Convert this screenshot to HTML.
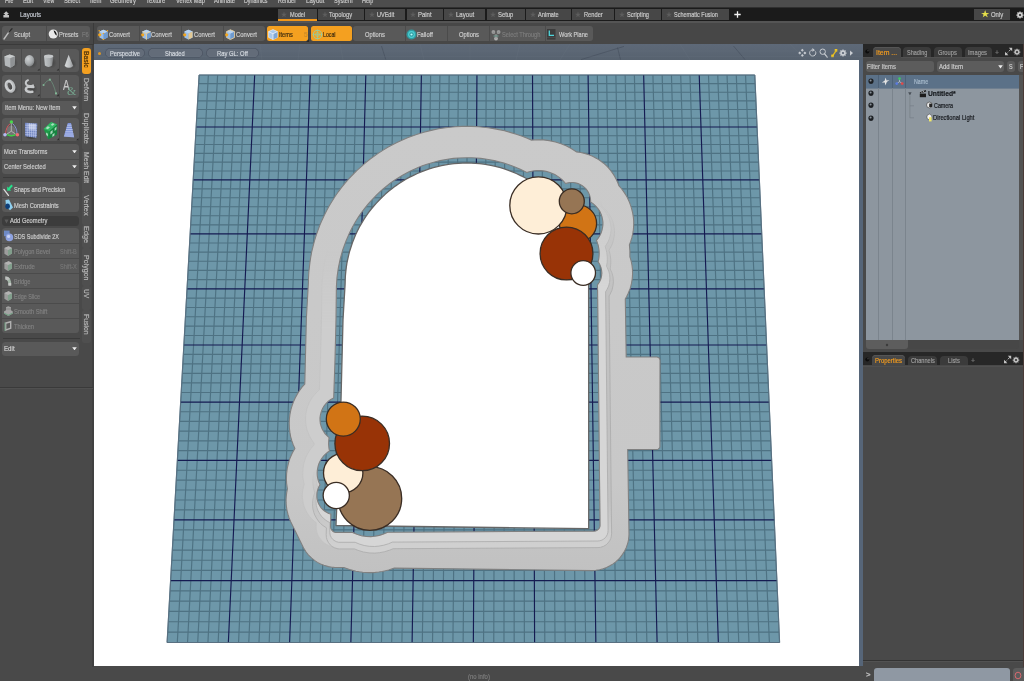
<!DOCTYPE html>
<html lang="en"><head><meta charset="utf-8"><title>Modo</title><style>
html,body{margin:0;padding:0;background:#494949;}
body{width:1024px;height:681px;overflow:hidden;position:relative;font-family:"Liberation Sans",sans-serif;}
#wrap{position:absolute;left:-20px;top:-20px;width:1064px;height:721px;background:#494949;filter:blur(0.7px);}
#app{position:absolute;left:20px;top:20px;width:1024px;height:681px;}

.b{position:absolute;display:block;}
.t{position:absolute;white-space:nowrap;transform-origin:0 50%;display:block;-webkit-text-stroke:0.2px currentColor;}
</style></head><body>
<div id="wrap"><div id="app">
<div class="b" style="left:94.00px;top:59.60px;width:764.60px;height:606.90px;background:#ffffff;"></div>
<div class="b" style="left:94.00px;top:44.00px;width:770.00px;height:15.60px;background:linear-gradient(#5e6978,#57626f);"></div>
<div class="b" style="left:858.60px;top:59.60px;width:5.40px;height:606.90px;background:#566578;"></div>
<svg class="b" style="left:0;top:0" width="1024" height="681" viewBox="0 0 1024 681"><polygon points="199.1,75.0 754.8,75.0 779.6,642.5 167.1,642.5" fill="#6d97a9"/><path d="M199.10 75.00L167.10 642.50M199.10 75.00L754.80 75.00M208.36 75.00L177.31 642.50M198.62 83.59L755.18 83.59M217.62 75.00L187.52 642.50M198.13 92.22L755.55 92.22M226.88 75.00L197.72 642.50M197.64 100.86L755.93 100.86M236.15 75.00L207.93 642.50M197.15 109.54L756.31 109.54M245.41 75.00L218.14 642.50M196.66 118.24L756.69 118.24M263.93 75.00L238.56 642.50M195.68 135.73L757.45 135.73M273.19 75.00L248.77 642.50M195.18 144.51L757.84 144.51M282.45 75.00L258.97 642.50M194.68 153.32L758.22 153.32M291.72 75.00L269.18 642.50M194.19 162.16L758.61 162.16M300.98 75.00L279.39 642.50M193.69 171.03L759.00 171.03M319.50 75.00L299.81 642.50M192.68 188.84L759.77 188.84M328.76 75.00L310.02 642.50M192.18 197.79L760.17 197.79M338.02 75.00L320.22 642.50M191.67 206.77L760.56 206.77M347.29 75.00L330.43 642.50M191.16 215.78L760.95 215.78M356.55 75.00L340.64 642.50M190.65 224.82L761.35 224.82M375.07 75.00L361.06 642.50M189.63 242.98L762.14 242.98M384.33 75.00L371.27 642.50M189.11 252.10L762.54 252.10M393.60 75.00L381.47 642.50M188.60 261.25L762.94 261.25M402.86 75.00L391.68 642.50M188.08 270.43L763.34 270.43M412.12 75.00L401.89 642.50M187.56 279.64L763.74 279.64M430.64 75.00L422.31 642.50M186.52 298.15L764.55 298.15M439.90 75.00L432.52 642.50M185.99 307.45L764.96 307.45M449.17 75.00L442.72 642.50M185.47 316.78L765.37 316.78M458.43 75.00L452.93 642.50M184.94 326.14L765.78 326.14M467.69 75.00L463.14 642.50M184.41 335.53L766.19 335.53M486.21 75.00L483.56 642.50M183.35 354.40L767.01 354.40M495.47 75.00L493.77 642.50M182.81 363.89L767.42 363.89M504.74 75.00L503.97 642.50M182.27 373.40L767.84 373.40M514.00 75.00L514.18 642.50M181.74 382.94L768.26 382.94M523.26 75.00L524.39 642.50M181.20 392.52L768.68 392.52M541.78 75.00L544.81 642.50M180.11 411.76L769.52 411.76M551.04 75.00L555.02 642.50M179.57 421.43L769.94 421.43M560.31 75.00L565.22 642.50M179.02 431.13L770.36 431.13M569.57 75.00L575.43 642.50M178.47 440.87L770.79 440.87M578.83 75.00L585.64 642.50M177.92 450.63L771.22 450.63M597.35 75.00L606.06 642.50M176.81 470.26L772.07 470.26M606.61 75.00L616.27 642.50M176.26 480.12L772.50 480.12M615.88 75.00L626.47 642.50M175.70 490.02L772.94 490.02M625.14 75.00L636.68 642.50M175.14 499.95L773.37 499.95M634.40 75.00L646.89 642.50M174.58 509.91L773.81 509.91M652.92 75.00L667.31 642.50M173.45 529.93L774.68 529.93M662.18 75.00L677.52 642.50M172.88 540.00L775.12 540.00M671.45 75.00L687.72 642.50M172.31 550.09L775.56 550.09M680.71 75.00L697.93 642.50M171.74 560.22L776.00 560.22M689.97 75.00L708.14 642.50M171.17 570.38L776.45 570.38M708.49 75.00L728.56 642.50M170.01 590.81L777.34 590.81M717.75 75.00L738.77 642.50M169.44 601.08L777.79 601.08M727.02 75.00L748.97 642.50M168.85 611.38L778.24 611.38M736.28 75.00L759.18 642.50M168.27 621.72L778.69 621.72M745.54 75.00L769.39 642.50M167.69 632.09L779.15 632.09M754.80 75.00L779.60 642.50M167.10 642.50L779.60 642.50" stroke="#4a6e7e" stroke-width="1.15" fill="none" opacity="0.9"/><path d="M254.67 75.00L228.35 642.50M196.17 126.97L757.07 126.97M310.24 75.00L289.60 642.50M193.18 179.92L759.39 179.92M365.81 75.00L350.85 642.50M190.14 233.88L761.74 233.88M421.38 75.00L412.10 642.50M187.04 288.88L764.15 288.88M476.95 75.00L473.35 642.50M183.88 344.95L766.60 344.95M532.52 75.00L534.60 642.50M180.65 402.13L769.10 402.13M588.09 75.00L595.85 642.50M177.37 460.43L771.64 460.43M643.66 75.00L657.10 642.50M174.01 519.90L774.24 519.90M699.23 75.00L718.35 642.50M170.59 580.58L776.89 580.58" stroke="#151b52" stroke-width="1.15" fill="none"/><polygon points="199.1,75.0 754.8,75.0 779.6,642.5 167.1,642.5" fill="none" stroke="#5a6f80" stroke-width="0.8"/><defs><linearGradient id="gs" x1="0" y1="0" x2="0" y2="1"><stop offset="0" stop-color="#cacaca"/><stop offset="0.8" stop-color="#c8c8c8"/><stop offset="1" stop-color="#c1c1c1"/></linearGradient><linearGradient id="zm" gradientUnits="userSpaceOnUse" x1="0" y1="250" x2="0" y2="330"><stop offset="0" stop-color="#fff" stop-opacity="0"/><stop offset="1" stop-color="#fff" stop-opacity="1"/></linearGradient><linearGradient id="zx" gradientUnits="userSpaceOnUse" x1="420" y1="0" x2="520" y2="0"><stop offset="0" stop-color="#fff" stop-opacity="1"/><stop offset="1" stop-color="#fff" stop-opacity="0"/></linearGradient><mask id="mk" maskUnits="userSpaceOnUse" x="0" y="0" width="1024" height="681"><rect x="0" y="0" width="1024" height="681" fill="url(#zm)"/></mask><mask id="mx" maskUnits="userSpaceOnUse" x="0" y="0" width="1024" height="681"><rect x="0" y="0" width="1024" height="681" fill="url(#zx)"/></mask><linearGradient id="gb" gradientUnits="userSpaceOnUse" x1="0" y1="500" x2="0" y2="545"><stop offset="0" stop-color="#c2c2c2"/><stop offset="1" stop-color="#d0d0d0"/></linearGradient><linearGradient id="gy" gradientUnits="userSpaceOnUse" x1="0" y1="470" x2="0" y2="515"><stop offset="0" stop-color="#fff" stop-opacity="0"/><stop offset="1" stop-color="#fff" stop-opacity="1"/></linearGradient><linearGradient id="gt" gradientUnits="userSpaceOnUse" x1="0" y1="200" x2="0" y2="290"><stop offset="0" stop-color="#fff" stop-opacity="0"/><stop offset="1" stop-color="#fff" stop-opacity="1"/></linearGradient><mask id="mb" maskUnits="userSpaceOnUse" x="0" y="0" width="1024" height="681"><rect x="0" y="0" width="470" height="681" fill="url(#gy)"/><rect x="470" y="0" width="554" height="681" fill="url(#gt)"/></mask><clipPath id="rc"><path d="M286.7 492.6L286.3 496.2L286.1 499.0L286.1 502.4L286.3 505.2L286.7 508.5L287.2 511.3L288.0 514.5L289.1 518.0L290.7 521.8L303.6 548.0L306.1 552.0L308.3 554.8L311.7 558.2L314.5 560.4L317.4 562.4L320.6 564.0L323.9 565.3L328.5 566.6L332.0 567.2L334.3 567.4L343.9 567.5L349.5 569.5L352.7 570.4L356.0 571.2L359.3 571.8L362.7 572.2L368.7 572.6L372.0 572.6L375.4 572.4L378.8 572.0L382.1 571.5L385.4 570.8L388.7 570.0L394.3 568.1L592.2 570.6L595.9 570.3L599.6 569.7L603.1 568.8L606.6 567.5L609.9 565.8L613.1 563.9L616.0 561.7L618.7 559.1L620.3 557.3L622.5 554.4L624.5 551.3L626.1 548.0L627.3 544.6L628.0 542.3L628.5 539.9L628.9 536.3L629.0 533.9L627.7 449.5L657.0 449.5L658.0 449.2L658.8 448.8L659.6 447.8L659.9 446.8L660.0 360.3L659.7 359.0L659.3 358.2L658.3 357.4L657.0 357.0L626.2 357.0L625.3 298.8L626.6 296.7L628.0 293.7L630.0 288.9L630.7 286.6L631.5 283.4L632.3 278.3L632.6 273.5L632.4 268.6L632.0 265.3L631.5 262.6L630.7 259.4L629.9 256.9L629.9 250.8L629.4 244.9L630.7 241.4L631.8 237.9L632.5 234.8L633.2 231.2L633.5 228.0L633.7 224.4L633.7 221.2L633.4 217.6L632.7 213.1L631.4 207.8L629.6 202.6L627.3 197.6L625.3 194.1L623.3 191.1L621.3 188.5L618.9 185.7L617.8 182.7L616.4 179.7L614.7 176.5L613.3 174.1L610.4 170.2L608.9 168.3L606.6 165.9L603.6 163.2L600.0 160.5L596.6 158.4L592.6 156.3L588.9 154.8L584.6 153.4L580.7 152.5L576.6 151.9L571.2 148.5L566.1 145.8L561.0 143.7L555.5 142.0L549.2 140.6L543.7 139.9L537.9 139.7L531.5 140.1L526.7 138.0L521.5 136.0L516.3 134.2L511.0 132.6L504.5 130.8L499.1 129.6L493.7 128.6L488.2 127.7L478.5 126.7L471.7 126.4L461.9 126.4L455.1 126.7L445.4 127.7L438.7 128.8L433.3 129.9L423.8 132.2L417.3 134.2L408.1 137.5L403.0 139.7L396.9 142.5L388.2 147.1L382.4 150.6L377.8 153.6L369.9 159.3L364.6 163.6L357.3 170.1L353.4 174.0L348.7 178.9L345.1 183.1L341.6 187.4L338.3 191.8L335.2 196.3L332.2 201.0L329.3 205.7L326.7 210.5L324.2 215.4L321.9 220.4L319.7 225.5L317.8 230.7L316.0 235.9L314.4 241.2L313.0 246.5L311.7 251.9L310.7 257.3L309.9 262.8L308.8 272.4L308.5 277.9L308.4 282.7L306.4 318.1L304.8 384.1L302.0 387.2L299.6 390.5L297.4 393.9L295.2 398.0L293.5 401.7L292.1 405.6L290.9 409.6L289.9 414.6L289.4 418.7L289.2 423.3L289.4 428.3L289.9 432.4L290.7 436.8L291.8 440.7L293.1 444.5L294.9 448.4L292.3 453.1L290.0 458.2L288.6 462.6L287.3 468.0L286.6 473.6L286.4 478.7L286.6 483.3L287.4 489.0ZM319.2 482.9L318.3 480.5L317.7 478.1L317.3 475.6L317.2 473.1L317.3 470.5L317.6 468.5L318.2 466.0L318.9 463.7L319.9 461.4L321.2 459.2L322.4 457.5L323.9 455.6L325.7 453.8L327.7 452.2L329.5 450.9L328.9 447.6L328.6 444.3L328.7 440.9L329.1 437.6L327.2 435.9L325.2 433.8L323.6 431.5L322.2 429.0L321.2 426.3L320.4 423.6L320.1 420.9L320.0 418.0L320.4 415.0L321.2 411.9L322.5 408.7L324.0 406.1L326.0 403.5L328.1 401.4L330.8 399.5L333.7 397.9L335.0 359.8L336.0 319.9L336.4 286.6L337.0 277.3L338.3 268.1L340.2 259.0L342.7 250.0L345.9 241.3L349.6 232.7L351.7 228.6L353.9 224.5L356.2 220.5L358.7 216.6L361.3 212.8L364.1 209.1L367.0 205.4L370.0 201.9L376.2 195.3L379.5 192.2L383.1 189.0L390.2 183.3L394.1 180.5L401.7 175.7L405.7 173.4L409.9 171.2L418.1 167.5L422.4 165.8L426.9 164.2L435.5 161.7L440.1 160.6L448.9 159.0L453.5 158.4L458.3 158.0L467.2 157.7L471.7 157.8L476.3 158.0L480.8 158.4L485.4 159.0L489.8 159.7L494.3 160.6L498.8 161.7L503.2 162.9L507.5 164.2L511.8 165.7L516.1 167.4L520.3 169.2L526.8 172.5L529.2 171.7L531.7 171.2L534.2 170.8L536.6 170.5L541.0 170.6L543.6 170.9L546.1 171.4L549.3 172.2L551.8 173.2L554.8 174.6L557.0 175.9L559.2 177.4L561.8 179.5L563.7 181.4L565.6 183.5L568.1 182.9L570.5 182.5L573.1 182.5L575.5 182.9L578.1 183.6L580.2 184.5L582.3 185.7L584.4 187.3L585.8 188.7L587.1 190.4L588.2 192.1L589.1 194.0L589.8 195.9L590.3 198.0L590.6 200.0L590.6 202.0L593.4 203.9L596.0 206.3L598.3 209.1L600.0 211.8L601.2 214.5L602.0 216.9L602.6 219.8L602.9 222.4L602.9 224.8L602.6 227.2L602.1 229.6L601.4 232.0L600.5 234.2L599.3 236.4L598.0 238.4L596.4 240.3L597.3 242.6L598.2 245.5L598.7 248.0L599.1 251.0L599.2 253.6L599.0 256.6L598.7 259.2L598.1 261.9L599.6 264.3L600.8 267.1L601.5 269.9L601.8 272.9L601.5 276.3L600.7 279.3L599.3 282.2L597.4 285.0L597.6 291.3L600.0 525.1L599.9 526.3L599.6 527.4L599.2 528.2L598.5 529.1L597.6 529.9L596.7 530.5L595.3 531.0L594.1 531.1L387.6 532.2L383.5 534.1L379.2 535.4L374.6 536.3L370.8 536.6L366.1 536.4L361.5 535.7L357.0 534.3L352.5 532.4L335.7 532.4L334.0 532.0L332.6 531.0L331.5 529.7L330.8 528.2L330.6 526.5L330.9 514.1L328.8 513.4L326.6 512.3L324.6 511.0L322.8 509.5L321.2 507.8L319.8 505.8L318.7 503.7L317.8 501.5L317.2 499.4L316.9 497.3L316.9 495.1L317.0 493.1L317.4 490.9L318.0 488.9L318.9 486.8L320.0 484.8Z" clip-rule="evenodd"/></clipPath></defs><path d="M286.7 492.6L286.3 496.2L286.1 499.0L286.1 502.4L286.3 505.2L286.7 508.5L287.2 511.3L288.0 514.5L289.1 518.0L290.7 521.8L303.6 548.0L306.1 552.0L308.3 554.8L311.7 558.2L314.5 560.4L317.4 562.4L320.6 564.0L323.9 565.3L328.5 566.6L332.0 567.2L334.3 567.4L343.9 567.5L349.5 569.5L352.7 570.4L356.0 571.2L359.3 571.8L362.7 572.2L368.7 572.6L372.0 572.6L375.4 572.4L378.8 572.0L382.1 571.5L385.4 570.8L388.7 570.0L394.3 568.1L592.2 570.6L595.9 570.3L599.6 569.7L603.1 568.8L606.6 567.5L609.9 565.8L613.1 563.9L616.0 561.7L618.7 559.1L620.3 557.3L622.5 554.4L624.5 551.3L626.1 548.0L627.3 544.6L628.0 542.3L628.5 539.9L628.9 536.3L629.0 533.9L627.7 449.5L657.0 449.5L658.0 449.2L658.8 448.8L659.6 447.8L659.9 446.8L660.0 360.3L659.7 359.0L659.3 358.2L658.3 357.4L657.0 357.0L626.2 357.0L625.3 298.8L626.6 296.7L628.0 293.7L630.0 288.9L630.7 286.6L631.5 283.4L632.3 278.3L632.6 273.5L632.4 268.6L632.0 265.3L631.5 262.6L630.7 259.4L629.9 256.9L629.9 250.8L629.4 244.9L630.7 241.4L631.8 237.9L632.5 234.8L633.2 231.2L633.5 228.0L633.7 224.4L633.7 221.2L633.4 217.6L632.7 213.1L631.4 207.8L629.6 202.6L627.3 197.6L625.3 194.1L623.3 191.1L621.3 188.5L618.9 185.7L617.8 182.7L616.4 179.7L614.7 176.5L613.3 174.1L610.4 170.2L608.9 168.3L606.6 165.9L603.6 163.2L600.0 160.5L596.6 158.4L592.6 156.3L588.9 154.8L584.6 153.4L580.7 152.5L576.6 151.9L571.2 148.5L566.1 145.8L561.0 143.7L555.5 142.0L549.2 140.6L543.7 139.9L537.9 139.7L531.5 140.1L526.7 138.0L521.5 136.0L516.3 134.2L511.0 132.6L504.5 130.8L499.1 129.6L493.7 128.6L488.2 127.7L478.5 126.7L471.7 126.4L461.9 126.4L455.1 126.7L445.4 127.7L438.7 128.8L433.3 129.9L423.8 132.2L417.3 134.2L408.1 137.5L403.0 139.7L396.9 142.5L388.2 147.1L382.4 150.6L377.8 153.6L369.9 159.3L364.6 163.6L357.3 170.1L353.4 174.0L348.7 178.9L345.1 183.1L341.6 187.4L338.3 191.8L335.2 196.3L332.2 201.0L329.3 205.7L326.7 210.5L324.2 215.4L321.9 220.4L319.7 225.5L317.8 230.7L316.0 235.9L314.4 241.2L313.0 246.5L311.7 251.9L310.7 257.3L309.9 262.8L308.8 272.4L308.5 277.9L308.4 282.7L306.4 318.1L304.8 384.1L302.0 387.2L299.6 390.5L297.4 393.9L295.2 398.0L293.5 401.7L292.1 405.6L290.9 409.6L289.9 414.6L289.4 418.7L289.2 423.3L289.4 428.3L289.9 432.4L290.7 436.8L291.8 440.7L293.1 444.5L294.9 448.4L292.3 453.1L290.0 458.2L288.6 462.6L287.3 468.0L286.6 473.6L286.4 478.7L286.6 483.3L287.4 489.0ZM319.2 482.9L318.3 480.5L317.7 478.1L317.3 475.6L317.2 473.1L317.3 470.5L317.6 468.5L318.2 466.0L318.9 463.7L319.9 461.4L321.2 459.2L322.4 457.5L323.9 455.6L325.7 453.8L327.7 452.2L329.5 450.9L328.9 447.6L328.6 444.3L328.7 440.9L329.1 437.6L327.2 435.9L325.2 433.8L323.6 431.5L322.2 429.0L321.2 426.3L320.4 423.6L320.1 420.9L320.0 418.0L320.4 415.0L321.2 411.9L322.5 408.7L324.0 406.1L326.0 403.5L328.1 401.4L330.8 399.5L333.7 397.9L335.0 359.8L336.0 319.9L336.4 286.6L337.0 277.3L338.3 268.1L340.2 259.0L342.7 250.0L345.9 241.3L349.6 232.7L351.7 228.6L353.9 224.5L356.2 220.5L358.7 216.6L361.3 212.8L364.1 209.1L367.0 205.4L370.0 201.9L376.2 195.3L379.5 192.2L383.1 189.0L390.2 183.3L394.1 180.5L401.7 175.7L405.7 173.4L409.9 171.2L418.1 167.5L422.4 165.8L426.9 164.2L435.5 161.7L440.1 160.6L448.9 159.0L453.5 158.4L458.3 158.0L467.2 157.7L471.7 157.8L476.3 158.0L480.8 158.4L485.4 159.0L489.8 159.7L494.3 160.6L498.8 161.7L503.2 162.9L507.5 164.2L511.8 165.7L516.1 167.4L520.3 169.2L526.8 172.5L529.2 171.7L531.7 171.2L534.2 170.8L536.6 170.5L541.0 170.6L543.6 170.9L546.1 171.4L549.3 172.2L551.8 173.2L554.8 174.6L557.0 175.9L559.2 177.4L561.8 179.5L563.7 181.4L565.6 183.5L568.1 182.9L570.5 182.5L573.1 182.5L575.5 182.9L578.1 183.6L580.2 184.5L582.3 185.7L584.4 187.3L585.8 188.7L587.1 190.4L588.2 192.1L589.1 194.0L589.8 195.9L590.3 198.0L590.6 200.0L590.6 202.0L593.4 203.9L596.0 206.3L598.3 209.1L600.0 211.8L601.2 214.5L602.0 216.9L602.6 219.8L602.9 222.4L602.9 224.8L602.6 227.2L602.1 229.6L601.4 232.0L600.5 234.2L599.3 236.4L598.0 238.4L596.4 240.3L597.3 242.6L598.2 245.5L598.7 248.0L599.1 251.0L599.2 253.6L599.0 256.6L598.7 259.2L598.1 261.9L599.6 264.3L600.8 267.1L601.5 269.9L601.8 272.9L601.5 276.3L600.7 279.3L599.3 282.2L597.4 285.0L597.6 291.3L600.0 525.1L599.9 526.3L599.6 527.4L599.2 528.2L598.5 529.1L597.6 529.9L596.7 530.5L595.3 531.0L594.1 531.1L387.6 532.2L383.5 534.1L379.2 535.4L374.6 536.3L370.8 536.6L366.1 536.4L361.5 535.7L357.0 534.3L352.5 532.4L335.7 532.4L334.0 532.0L332.6 531.0L331.5 529.7L330.8 528.2L330.6 526.5L330.9 514.1L328.8 513.4L326.6 512.3L324.6 511.0L322.8 509.5L321.2 507.8L319.8 505.8L318.7 503.7L317.8 501.5L317.2 499.4L316.9 497.3L316.9 495.1L317.0 493.1L317.4 490.9L318.0 488.9L318.9 486.8L320.0 484.8Z" fill="url(#gs)" fill-rule="evenodd"/><g clip-path="url(#rc)"><g mask="url(#mk)"><g mask="url(#mx)"><path d="M304.3 484.2L303.2 488.2L302.5 492.0L302.4 495.6L302.4 497.9L303.2 503.1L304.3 506.9L305.2 509.1L307.1 512.8L309.4 516.2L312.2 519.3L316.2 522.8L316.2 528.2L316.7 531.3L317.0 532.7L318.2 535.5L319.6 538.0L322.5 541.4L324.7 543.2L327.3 544.8L328.6 545.4L332.9 546.7L335.7 546.9L349.5 546.9L352.9 548.3L359.2 550.0L363.8 550.7L370.2 551.1L375.7 550.8L381.9 549.7L387.9 547.9L390.8 546.7L594.2 545.6L598.4 545.1L602.8 543.7L606.4 541.5L609.3 538.8L611.6 535.7L613.1 532.7L614.1 529.0L614.5 525.0L612.0 289.2L614.3 284.3L615.5 280.0L616.0 277.5L616.3 272.9L616.0 268.6L615.6 266.4L614.6 262.5L613.3 259.4L613.7 254.3L613.6 250.5L613.1 246.2L612.4 242.6L613.9 239.8L614.8 237.5L616.3 232.5L617.0 228.7L617.4 224.8L617.4 222.4L617.0 218.4L616.2 213.9L615.0 209.9L613.2 205.8L610.7 201.5L609.5 199.9L607.2 197.0L604.3 194.3L603.5 191.0L602.8 189.2L600.4 184.3L598.4 181.4L597.1 179.7L594.6 177.1L591.2 174.3L589.6 173.2L585.8 171.1L581.9 169.6L577.5 168.5L575.1 168.2L570.7 168.0L568.4 166.2L565.2 163.9L561.0 161.5L558.0 160.1L554.3 158.6L550.0 157.4L545.2 156.5L541.2 156.1L535.4 156.1L531.9 156.4L528.3 157.0L521.9 154.1L517.1 152.3L507.5 149.0L497.7 146.5L487.7 144.7L482.1 144.0L472.5 143.3L466.7 143.2L457.0 143.6L451.7 144.1L446.4 144.7L437.6 146.3L431.4 147.8L422.8 150.3L417.1 152.3L412.1 154.3L403.2 158.3L398.5 160.8L393.9 163.5L386.3 168.3L381.1 172.0L374.1 177.6L369.9 181.3L365.6 185.4L359.4 191.9L352.7 200.0L346.8 208.4L341.4 217.1L336.6 226.3L332.6 235.5L329.1 245.1L326.3 255.1L324.1 265.1L322.7 275.4L321.9 286.5L321.5 319.6L320.5 359.4L319.4 389.8L315.9 393.1L314.6 394.6L312.5 397.2L309.9 401.4L307.7 406.4L307.1 408.3L305.9 413.4L305.6 416.4L305.6 421.1L306.1 425.5L307.1 430.0L307.7 431.7L309.5 435.9L311.8 440.0L314.1 443.1L314.1 444.8L311.2 448.3L308.6 452.0L306.7 455.5L305.6 457.9L304.0 462.8L303.5 465.3L303.0 468.6L302.7 473.8L303.0 477.8L303.6 481.7ZM318.3 480.5L317.7 478.1L317.3 475.6L317.2 473.1L317.3 470.5L317.6 468.5L318.2 466.0L318.9 463.7L319.9 461.4L321.2 459.2L323.9 455.6L325.7 453.8L327.7 452.2L329.5 450.9L328.9 447.6L328.6 444.3L328.7 440.9L329.1 437.6L327.2 435.9L325.2 433.8L323.6 431.5L322.2 429.0L321.2 426.3L320.4 423.6L320.1 420.9L320.0 418.0L320.4 415.0L321.2 411.9L322.5 408.7L324.0 406.1L326.0 403.5L328.1 401.4L330.8 399.5L333.7 397.9L335.0 359.8L336.0 319.9L336.4 286.6L337.0 277.3L338.3 268.1L340.2 259.0L342.7 250.0L345.9 241.3L349.6 232.7L353.9 224.5L358.7 216.6L364.1 209.1L370.0 201.9L376.2 195.3L379.5 192.2L383.1 189.0L390.2 183.3L394.1 180.5L401.7 175.7L409.9 171.2L418.1 167.5L422.4 165.8L426.9 164.2L435.5 161.7L440.1 160.6L448.9 159.0L458.3 158.0L467.2 157.7L476.3 158.0L485.4 159.0L494.3 160.6L503.2 162.9L511.8 165.7L520.3 169.2L526.8 172.5L531.7 171.2L536.6 170.5L541.0 170.6L546.1 171.4L549.3 172.2L551.8 173.2L554.8 174.6L557.0 175.9L559.2 177.4L561.8 179.5L563.7 181.4L565.6 183.5L568.1 182.9L570.5 182.5L573.1 182.5L575.5 182.9L578.1 183.6L580.2 184.5L582.3 185.7L584.4 187.3L585.8 188.7L587.1 190.4L588.2 192.1L589.1 194.0L589.8 195.9L590.3 198.0L590.6 200.0L590.6 202.0L593.4 203.9L596.0 206.3L598.3 209.1L600.0 211.8L601.2 214.5L602.0 216.9L602.6 219.8L602.9 222.4L602.9 224.8L602.6 227.2L602.1 229.6L601.4 232.0L600.5 234.2L599.3 236.4L598.0 238.4L596.4 240.3L597.3 242.6L598.2 245.5L598.7 248.0L599.1 251.0L599.2 253.6L599.0 256.6L598.7 259.2L598.1 261.9L599.6 264.3L600.8 267.1L601.5 269.9L601.8 272.9L601.5 276.3L600.7 279.3L599.3 282.2L597.4 285.0L600.0 525.1L599.9 526.3L599.6 527.4L598.5 529.1L597.6 529.9L596.7 530.5L595.3 531.0L594.1 531.1L387.6 532.2L383.5 534.1L379.2 535.4L374.6 536.3L370.8 536.6L366.1 536.4L361.5 535.7L357.0 534.3L352.5 532.4L335.7 532.4L334.0 532.0L332.6 531.0L331.5 529.7L330.8 528.2L330.6 526.5L330.9 514.1L328.8 513.4L326.6 512.3L324.6 511.0L322.8 509.5L321.2 507.8L319.8 505.8L318.7 503.7L317.8 501.5L317.2 499.4L316.9 497.3L316.9 495.1L317.0 493.1L317.4 490.9L318.0 488.9L318.9 486.8L320.0 484.8L319.2 482.9Z" fill="#cdcdcd" stroke="#c1c1c1" stroke-width="0.7"/></g></g><g mask="url(#mb)"><path d="M314.8 492.9L314.0 494.8L313.2 497.7L312.7 500.7L312.5 503.6L312.6 506.4L313.0 509.3L313.8 512.3L314.7 514.9L316.8 518.7L319.1 521.9L320.7 523.6L322.9 525.5L326.4 527.8L326.2 534.4L326.4 537.4L327.0 539.7L328.5 542.7L330.3 544.9L332.0 546.4L334.6 547.8L337.9 548.8L339.5 548.9L354.5 548.9L358.1 550.4L363.5 552.0L369.1 552.9L374.7 553.1L379.5 552.7L384.6 551.7L389.8 550.1L393.1 548.7L598.0 547.6L600.6 547.3L603.6 546.3L606.1 544.8L608.1 542.9L609.8 540.5L610.8 538.4L611.3 536.3L611.6 533.3L609.1 295.9L610.1 294.3L612.0 290.1L613.0 285.7L613.4 281.8L613.1 277.9L612.9 276.3L611.9 272.7L610.2 268.9L610.6 265.7L610.8 262.7L610.7 259.0L610.2 255.0L609.0 250.2L611.4 246.0L612.5 243.3L613.4 240.3L614.2 236.3L614.5 233.5L614.5 230.6L614.1 227.2L613.4 223.5L612.3 220.2L610.7 216.8L608.5 213.2L606.0 209.9L601.9 206.2L600.9 201.5L600.0 199.3L598.9 196.9L596.8 193.7L595.2 191.8L593.4 190.0L589.7 187.1L587.6 185.9L585.1 184.8L580.5 183.5L576.2 183.0L578.1 183.6L580.2 184.5L582.3 185.7L584.4 187.3L585.8 188.7L587.1 190.4L588.2 192.1L589.1 194.0L589.8 195.9L590.3 198.0L590.6 200.0L590.6 202.0L593.4 203.9L596.0 206.3L598.3 209.1L600.0 211.8L601.2 214.5L602.0 216.9L602.6 219.8L602.9 222.4L602.9 224.8L602.6 227.2L602.1 229.6L601.4 232.0L600.5 234.2L599.3 236.4L598.0 238.4L596.4 240.3L597.3 242.6L598.2 245.5L598.7 248.0L599.1 251.0L599.2 253.6L599.0 256.6L598.7 259.2L598.1 261.9L599.6 264.3L600.8 267.1L601.5 269.9L601.8 272.9L601.5 276.3L600.7 279.3L599.3 282.2L597.4 285.0L600.0 525.1L599.9 526.3L599.6 527.4L598.5 529.1L597.6 529.9L596.7 530.5L595.3 531.0L594.1 531.1L387.6 532.2L383.5 534.1L379.2 535.4L374.6 536.3L370.8 536.6L366.1 536.4L361.5 535.7L357.0 534.3L352.5 532.4L335.7 532.4L334.0 532.0L332.6 531.0L331.5 529.7L330.8 528.2L330.6 526.5L330.9 514.1L328.8 513.4L326.6 512.3L324.6 511.0L322.8 509.5L321.2 507.8L319.8 505.8L318.7 503.7L317.8 501.5L317.2 499.4L316.9 497.3L316.9 495.1L317.0 493.1L317.4 490.9L318.0 488.9L318.9 486.8L320.0 484.8L319.2 482.9L318.3 480.5L317.7 478.1L317.3 475.6L317.2 473.1L317.3 470.5L317.6 468.5L318.2 466.0L318.9 463.7L319.9 461.4L321.2 459.1L318.3 463.0L316.3 466.5L314.9 469.9L314.0 472.5L313.4 475.4L313.0 478.1L312.8 481.0L313.0 484.8L313.6 488.8ZM571.3 182.5L567.8 179.6L565.0 177.7L562.0 175.9L558.7 174.4L555.5 173.2L551.7 172.1L548.3 171.5L544.8 171.1L549.3 172.2L551.8 173.2L554.8 174.6L557.0 175.9L559.2 177.4L561.8 179.5L563.7 181.4L565.6 183.5L568.1 182.9ZM529.6 171.6L522.8 168.6L518.0 166.7L509.2 163.8L504.6 162.5L494.8 160.3L490.0 159.6L484.9 158.9L494.3 160.6L498.8 161.7L507.5 164.2L516.1 167.4L520.3 169.2L526.8 172.5ZM362.3 211.5L358.3 216.8L353.0 224.9L348.3 233.2L345.8 238.1L342.0 246.9L338.7 256.2L336.0 265.7L334.0 275.4L332.7 285.1L332.0 294.9L331.6 328.3L330.6 368.0L329.5 400.4L330.8 399.5L333.7 397.9L335.0 359.8L336.0 319.9L336.4 286.6L337.0 277.3L338.3 268.1L340.2 259.0L342.7 250.0L345.9 241.3L349.6 232.7L353.9 224.5L358.7 216.6ZM323.6 406.7L321.1 409.9L319.3 412.9L317.3 417.6L316.0 423.0L315.7 425.9L315.7 429.2L316.4 434.3L317.2 437.5L318.5 440.7L320.8 444.9L322.5 447.2L324.3 449.2L324.2 452.8L324.4 455.1L325.7 453.8L327.7 452.2L329.5 450.9L328.9 447.6L328.6 444.3L328.7 440.9L329.1 437.6L327.2 435.9L325.2 433.8L323.6 431.5L322.2 429.0L321.2 426.3L320.4 423.6L320.1 420.9L320.0 418.0L320.4 415.0L321.2 411.9L322.5 408.7Z" fill="url(#gb)" stroke="#ababab" stroke-width="0.8"/><path d="M316.9 494.3L316.1 498.3L316.0 500.5L316.1 503.1L316.4 505.6L317.0 507.9L318.2 511.0L319.9 514.0L321.4 516.1L323.2 518.1L325.9 520.3L327.9 521.6L329.9 522.6L329.8 532.6L330.2 535.2L331.3 537.5L332.9 539.5L333.9 540.3L336.2 541.6L338.6 542.3L355.2 542.3L359.2 544.0L364.2 545.5L369.2 546.3L374.4 546.5L378.9 546.1L383.8 545.2L388.7 543.7L392.3 542.1L597.6 541.0L599.6 540.8L602.0 540.1L603.8 539.0L605.3 537.7L606.5 536.1L607.4 534.3L607.9 532.3L608.1 530.3L605.6 291.7L606.9 289.7L608.6 286.1L609.6 282.3L609.9 278.2L609.6 274.5L608.8 271.5L607.4 268.0L606.5 266.4L607.2 262.1L607.3 259.1L607.2 256.1L606.7 252.3L606.1 249.7L605.2 246.5L606.7 244.1L608.0 241.9L609.4 238.5L610.1 236.1L610.7 233.2L611.0 230.4L611.0 227.6L610.6 224.4L609.9 221.1L609.0 218.2L607.6 215.2L605.6 212.0L603.2 209.0L600.2 206.1L598.6 205.0L598.3 202.5L597.7 200.1L596.9 197.8L595.9 195.7L594.1 192.9L592.7 191.1L591.0 189.4L588.3 187.3L585.4 185.7L582.7 184.6L580.1 183.9L578.1 183.6L580.2 184.5L582.3 185.7L584.4 187.3L585.8 188.7L587.1 190.4L588.2 192.1L589.1 194.0L589.8 195.9L590.3 198.0L590.6 200.0L590.6 202.0L593.4 203.9L596.0 206.3L598.3 209.1L600.0 211.8L601.2 214.5L602.0 216.9L602.6 219.8L602.9 222.4L602.9 224.8L602.6 227.2L602.1 229.6L601.4 232.0L600.5 234.2L599.3 236.4L598.0 238.4L596.4 240.3L597.3 242.6L598.2 245.5L598.7 248.0L599.1 251.0L599.2 253.6L599.0 256.6L598.7 259.2L598.1 261.9L599.6 264.3L600.8 267.1L601.5 269.9L601.8 272.9L601.5 276.3L600.7 279.3L599.3 282.2L597.4 285.0L600.0 525.1L599.9 526.3L599.6 527.4L598.5 529.1L597.6 529.9L596.7 530.5L595.3 531.0L594.1 531.1L387.6 532.2L383.5 534.1L379.2 535.4L374.6 536.3L370.8 536.6L366.1 536.4L361.5 535.7L357.0 534.3L352.5 532.4L335.7 532.4L334.0 532.0L332.6 531.0L331.5 529.7L330.8 528.2L330.6 526.5L330.9 514.1L328.8 513.4L326.6 512.3L324.6 511.0L322.8 509.5L321.2 507.8L319.8 505.8L318.7 503.7L317.8 501.5L317.2 499.4L316.9 497.3ZM569.6 182.7L565.3 179.0L563.0 177.4L560.2 175.9L557.2 174.5L554.3 173.4L550.8 172.4L547.8 171.8L551.8 173.2L554.8 174.6L557.0 175.9L559.2 177.4L561.8 179.5L563.7 181.4L565.6 183.5L568.1 182.9ZM528.5 171.9L521.3 168.6L512.5 165.3L503.5 162.7L496.9 161.2L503.2 162.9L511.8 165.7L520.3 169.2L526.8 172.5ZM337.5 272.5L336.2 282.2L335.5 291.9L335.1 325.2L334.1 365.1L332.9 398.3L333.7 397.9L335.0 359.8L336.0 319.9L336.4 286.6L337.0 277.3L338.0 270.0ZM319.6 419.2L319.1 423.7L319.2 426.7L319.7 430.3L320.6 433.6L321.7 436.2L323.1 438.9L325.3 442.0L327.9 444.8L327.7 449.4L327.9 452.0L329.5 450.9L328.9 447.6L328.6 444.3L328.7 440.9L329.1 437.6L327.2 435.9L325.2 433.8L323.6 431.5L322.2 429.0L321.2 426.3L320.4 423.6L320.1 420.9L320.1 417.3ZM317.3 470.7L316.4 475.5L316.3 478.1L316.5 481.4L317.0 484.8L318.1 488.7L318.9 486.8L320.0 484.8L319.2 482.9L318.3 480.5L317.7 478.1L317.3 475.6L317.2 473.1Z" fill="#d6d6d6" stroke="#ababab" stroke-width="0.8"/></g></g><path d="M286.7 492.6L286.3 496.2L286.1 499.0L286.1 502.4L286.3 505.2L286.7 508.5L287.2 511.3L288.0 514.5L289.1 518.0L290.7 521.8L303.6 548.0L306.1 552.0L308.3 554.8L311.7 558.2L314.5 560.4L317.4 562.4L320.6 564.0L323.9 565.3L328.5 566.6L332.0 567.2L334.3 567.4L343.9 567.5L349.5 569.5L352.7 570.4L356.0 571.2L359.3 571.8L362.7 572.2L368.7 572.6L372.0 572.6L375.4 572.4L378.8 572.0L382.1 571.5L385.4 570.8L388.7 570.0L394.3 568.1L592.2 570.6L595.9 570.3L599.6 569.7L603.1 568.8L606.6 567.5L609.9 565.8L613.1 563.9L616.0 561.7L618.7 559.1L620.3 557.3L622.5 554.4L624.5 551.3L626.1 548.0L627.3 544.6L628.0 542.3L628.5 539.9L628.9 536.3L629.0 533.9L627.7 449.5L657.0 449.5L658.0 449.2L658.8 448.8L659.6 447.8L659.9 446.8L660.0 360.3L659.7 359.0L659.3 358.2L658.3 357.4L657.0 357.0L626.2 357.0L625.3 298.8L626.6 296.7L628.0 293.7L630.0 288.9L630.7 286.6L631.5 283.4L632.3 278.3L632.6 273.5L632.4 268.6L632.0 265.3L631.5 262.6L630.7 259.4L629.9 256.9L629.9 250.8L629.4 244.9L630.7 241.4L631.8 237.9L632.5 234.8L633.2 231.2L633.5 228.0L633.7 224.4L633.7 221.2L633.4 217.6L632.7 213.1L631.4 207.8L629.6 202.6L627.3 197.6L625.3 194.1L623.3 191.1L621.3 188.5L618.9 185.7L617.8 182.7L616.4 179.7L614.7 176.5L613.3 174.1L610.4 170.2L608.9 168.3L606.6 165.9L603.6 163.2L600.0 160.5L596.6 158.4L592.6 156.3L588.9 154.8L584.6 153.4L580.7 152.5L576.6 151.9L571.2 148.5L566.1 145.8L561.0 143.7L555.5 142.0L549.2 140.6L543.7 139.9L537.9 139.7L531.5 140.1L526.7 138.0L521.5 136.0L516.3 134.2L511.0 132.6L504.5 130.8L499.1 129.6L493.7 128.6L488.2 127.7L478.5 126.7L471.7 126.4L461.9 126.4L455.1 126.7L445.4 127.7L438.7 128.8L433.3 129.9L423.8 132.2L417.3 134.2L408.1 137.5L403.0 139.7L396.9 142.5L388.2 147.1L382.4 150.6L377.8 153.6L369.9 159.3L364.6 163.6L357.3 170.1L353.4 174.0L348.7 178.9L345.1 183.1L341.6 187.4L338.3 191.8L335.2 196.3L332.2 201.0L329.3 205.7L326.7 210.5L324.2 215.4L321.9 220.4L319.7 225.5L317.8 230.7L316.0 235.9L314.4 241.2L313.0 246.5L311.7 251.9L310.7 257.3L309.9 262.8L308.8 272.4L308.5 277.9L308.4 282.7L306.4 318.1L304.8 384.1L302.0 387.2L299.6 390.5L297.4 393.9L295.2 398.0L293.5 401.7L292.1 405.6L290.9 409.6L289.9 414.6L289.4 418.7L289.2 423.3L289.4 428.3L289.9 432.4L290.7 436.8L291.8 440.7L293.1 444.5L294.9 448.4L292.3 453.1L290.0 458.2L288.6 462.6L287.3 468.0L286.6 473.6L286.4 478.7L286.6 483.3L287.4 489.0ZM319.2 482.9L318.3 480.5L317.7 478.1L317.3 475.6L317.2 473.1L317.3 470.5L317.6 468.5L318.2 466.0L318.9 463.7L319.9 461.4L321.2 459.2L322.4 457.5L323.9 455.6L325.7 453.8L327.7 452.2L329.5 450.9L328.9 447.6L328.6 444.3L328.7 440.9L329.1 437.6L327.2 435.9L325.2 433.8L323.6 431.5L322.2 429.0L321.2 426.3L320.4 423.6L320.1 420.9L320.0 418.0L320.4 415.0L321.2 411.9L322.5 408.7L324.0 406.1L326.0 403.5L328.1 401.4L330.8 399.5L333.7 397.9L335.0 359.8L336.0 319.9L336.4 286.6L337.0 277.3L338.3 268.1L340.2 259.0L342.7 250.0L345.9 241.3L349.6 232.7L351.7 228.6L353.9 224.5L356.2 220.5L358.7 216.6L361.3 212.8L364.1 209.1L367.0 205.4L370.0 201.9L376.2 195.3L379.5 192.2L383.1 189.0L390.2 183.3L394.1 180.5L401.7 175.7L405.7 173.4L409.9 171.2L418.1 167.5L422.4 165.8L426.9 164.2L435.5 161.7L440.1 160.6L448.9 159.0L453.5 158.4L458.3 158.0L467.2 157.7L471.7 157.8L476.3 158.0L480.8 158.4L485.4 159.0L489.8 159.7L494.3 160.6L498.8 161.7L503.2 162.9L507.5 164.2L511.8 165.7L516.1 167.4L520.3 169.2L526.8 172.5L529.2 171.7L531.7 171.2L534.2 170.8L536.6 170.5L541.0 170.6L543.6 170.9L546.1 171.4L549.3 172.2L551.8 173.2L554.8 174.6L557.0 175.9L559.2 177.4L561.8 179.5L563.7 181.4L565.6 183.5L568.1 182.9L570.5 182.5L573.1 182.5L575.5 182.9L578.1 183.6L580.2 184.5L582.3 185.7L584.4 187.3L585.8 188.7L587.1 190.4L588.2 192.1L589.1 194.0L589.8 195.9L590.3 198.0L590.6 200.0L590.6 202.0L593.4 203.9L596.0 206.3L598.3 209.1L600.0 211.8L601.2 214.5L602.0 216.9L602.6 219.8L602.9 222.4L602.9 224.8L602.6 227.2L602.1 229.6L601.4 232.0L600.5 234.2L599.3 236.4L598.0 238.4L596.4 240.3L597.3 242.6L598.2 245.5L598.7 248.0L599.1 251.0L599.2 253.6L599.0 256.6L598.7 259.2L598.1 261.9L599.6 264.3L600.8 267.1L601.5 269.9L601.8 272.9L601.5 276.3L600.7 279.3L599.3 282.2L597.4 285.0L597.6 291.3L600.0 525.1L599.9 526.3L599.6 527.4L599.2 528.2L598.5 529.1L597.6 529.9L596.7 530.5L595.3 531.0L594.1 531.1L387.6 532.2L383.5 534.1L379.2 535.4L374.6 536.3L370.8 536.6L366.1 536.4L361.5 535.7L357.0 534.3L352.5 532.4L335.7 532.4L334.0 532.0L332.6 531.0L331.5 529.7L330.8 528.2L330.6 526.5L330.9 514.1L328.8 513.4L326.6 512.3L324.6 511.0L322.8 509.5L321.2 507.8L319.8 505.8L318.7 503.7L317.8 501.5L317.2 499.4L316.9 497.3L316.9 495.1L317.0 493.1L317.4 490.9L318.0 488.9L318.9 486.8L320.0 484.8Z" fill="none" stroke="#808080" stroke-width="1.1"/><path d="M336.0 525.5L588.7 528.7L588.6 284.1L588.5 279.9L588.3 275.7L587.9 271.4L587.4 267.2L586.7 263.1L585.9 258.9L585.0 254.8L583.9 250.7L582.6 246.7L581.3 242.7L579.7 238.7L578.1 234.8L576.3 231.0L574.3 227.2L572.3 223.6L570.1 219.9L567.8 216.4L565.3 212.9L562.8 209.5L560.1 206.3L557.3 203.1L554.4 200.0L551.4 197.0L548.3 194.1L545.1 191.3L541.8 188.7L538.4 186.1L534.9 183.7L531.3 181.4L527.7 179.2L524.0 177.2L520.2 175.3L516.3 173.5L512.4 171.8L508.5 170.3L504.4 168.9L500.4 167.7L496.3 166.6L492.1 165.6L488.0 164.8L483.8 164.2L479.5 163.7L475.3 163.3L471.1 163.1L466.8 163.0L462.6 163.1L458.3 163.3L454.1 163.7L449.9 164.2L445.7 164.8L441.5 165.6L437.4 166.6L433.3 167.7L429.2 168.9L425.2 170.3L421.2 171.8L417.3 173.5L413.5 175.3L409.7 177.2L405.9 179.2L402.3 181.4L398.7 183.7L395.3 186.1L391.9 188.7L388.6 191.3L385.4 194.1L382.3 197.0L379.3 200.0L376.4 203.1L373.6 206.3L370.9 209.5L368.3 212.9L365.9 216.4L363.6 219.9L361.4 223.6L359.3 227.2L357.4 231.0L355.6 234.8L354.0 238.7L352.4 242.7L351.1 246.7L349.8 250.7L348.7 254.8L347.8 258.9L346.9 263.1L346.3 267.2L345.8 271.4L345.4 275.7L345.2 279.9L345.1 284.1L343.0 320.0L341.0 400.0Z" fill="#ffffff" stroke="#666666" stroke-width="1.3" stroke-linejoin="round"/><circle cx="578.0" cy="223.5" r="18.6" fill="#d17415" stroke="#3a2d24" stroke-width="1.3"/><circle cx="538.4" cy="205.4" r="28.6" fill="#feeed7" stroke="#3a2d24" stroke-width="1.3"/><circle cx="571.8" cy="201.3" r="12.5" fill="#967554" stroke="#3a2d24" stroke-width="1.3"/><circle cx="566.5" cy="253.5" r="26.400000000000002" fill="#983306" stroke="#3a2d24" stroke-width="1.3"/><circle cx="583.2" cy="273.0" r="12.299999999999999" fill="#ffffff" stroke="#3a2d24" stroke-width="1.3"/><circle cx="369.9" cy="498.5" r="31.800000000000004" fill="#967554" stroke="#3a2d24" stroke-width="1.3"/><circle cx="343.2" cy="473.0" r="19.700000000000003" fill="#feeed7" stroke="#3a2d24" stroke-width="1.3"/><circle cx="362.2" cy="443.4" r="27.3" fill="#983306" stroke="#3a2d24" stroke-width="1.3"/><circle cx="343.3" cy="419.1" r="17.0" fill="#d17415" stroke="#3a2d24" stroke-width="1.3"/><circle cx="336.25" cy="495.5" r="13.1" fill="#ffffff" stroke="#3a2d24" stroke-width="1.3"/></svg>
<div class="b" style="left:104.50px;top:48.40px;width:40.50px;height:9.70px;background:#636c79;border-radius:5px;box-shadow:inset 0 0 0 0.7px #4a5361;"></div>
<div class="b" style="left:147.80px;top:48.40px;width:55.00px;height:9.70px;background:#636c79;border-radius:5px;box-shadow:inset 0 0 0 0.7px #4a5361;"></div>
<div class="b" style="left:205.60px;top:48.40px;width:53.10px;height:9.70px;background:#636c79;border-radius:5px;box-shadow:inset 0 0 0 0.7px #4a5361;"></div>
<div class="b" style="left:98.20px;top:51.70px;width:3.20px;height:3.20px;background:#d9962a;border-radius:2px;"></div>
<span class="t" style="left:109.50px;top:48.60px;font-size:8px;line-height:10px;color:#d5dae0;transform:scaleX(0.7178);">Perspective</span>
<span class="t" style="left:165.30px;top:48.60px;font-size:8px;line-height:10px;color:#d5dae0;transform:scaleX(0.7143);">Shaded</span>
<span class="t" style="left:216.80px;top:48.60px;font-size:8px;line-height:10px;color:#d5dae0;transform:scaleX(0.7318);">Ray GL: Off</span>
<svg class="b" style="left:0;top:40px" width="1024" height="24" viewBox="0 40 1024 24"><path d="M802.3 48.8L803.8 50.3L802.3 51.8L800.8 50.3Z" fill="#c9cdd2"/><path d="M802.3 54.0L803.8 55.5L802.3 57.0L800.8 55.5Z" fill="#c9cdd2"/><path d="M799.6999999999999 51.4L801.1999999999999 52.9L799.6999999999999 54.4L798.1999999999999 52.9Z" fill="#c9cdd2"/><path d="M804.9 51.4L806.4 52.9L804.9 54.4L803.4 52.9Z" fill="#c9cdd2"/><path d="M815.4 51.4A3.1 3.1 0 1 1 812.2 49.9" fill="none" stroke="#c9cdd2" stroke-width="1"/><path d="M812.4 48L815 50.2L812.2 51.8Z" fill="#c9cdd2"/><circle cx="822.7" cy="51.7" r="2.7" fill="none" stroke="#c9cdd2" stroke-width="1"/><path d="M824.6 53.9L827.2 57.2" stroke="#c9cdd2" stroke-width="1.2" stroke-linecap="round"/><path d="M832.6 55.8L836.2 50.6" stroke="#e2b91e" stroke-width="1.4"/><rect x="834.7" y="49" width="2.6" height="2.6" fill="#efc522"/><rect x="831.2" y="54.6" width="2.6" height="2.6" fill="#efc522"/><path d="M850 50.4L853 53L850 55.8Z" fill="#c9cdd2"/><path d="M381.5 46L385.8 59.6M624 46.4L581 59.6M617.5 47.5L620.5 59.6M733.5 46L745 59.6" stroke="#434c5a" stroke-width="0.7" opacity="0.8" fill="none"/><path d="M94 51H864M94 56.5H864M260 44L262 60M300 44L298 60M340 44L343 60M420 44L424 60M470 44L470 60M520 44L516 60M570 44L560 60M680 44L690 60M790 44L806 60" stroke="#6c7786" stroke-width="0.5" opacity="0.35" fill="none"/></svg>
<svg class="b" style="left:837.70px;top:48.20px;" width="10" height="10" viewBox="0 0 10 10"><path d="M6.80 5.00L8.60 5.00M6.27 6.27L7.55 7.55M5.00 6.80L5.00 8.60M3.73 6.27L2.45 7.55M3.20 5.00L1.40 5.00M3.73 3.73L2.45 2.45M5.00 3.20L5.00 1.40M6.27 3.73L7.55 2.45" stroke="#c9cdd2" stroke-width="1.25" fill="none"/><circle cx="5" cy="5" r="2.66" fill="#c9cdd2"/><circle cx="5" cy="5" r="1.08" fill="#5a6575"/></svg>
<div class="b" style="left:-20.00px;top:-20.00px;width:1064.00px;height:27.20px;background:#4d4d4d;"></div>
<div class="b" style="left:-20.00px;top:7.20px;width:1064.00px;height:1.20px;background:#303030;"></div>
<span class="t" style="left:5.00px;top:-4.50px;font-size:8px;line-height:10px;color:#cccccc;transform:scaleX(0.6439);">File</span>
<span class="t" style="left:23.00px;top:-4.50px;font-size:8px;line-height:10px;color:#cccccc;transform:scaleX(0.7254);">Edit</span>
<span class="t" style="left:43.00px;top:-4.50px;font-size:8px;line-height:10px;color:#cccccc;transform:scaleX(0.6514);">View</span>
<span class="t" style="left:64.00px;top:-4.50px;font-size:8px;line-height:10px;color:#cccccc;transform:scaleX(0.7196);">Select</span>
<span class="t" style="left:89.50px;top:-4.50px;font-size:8px;line-height:10px;color:#cccccc;transform:scaleX(0.7392);">Item</span>
<span class="t" style="left:110.00px;top:-4.50px;font-size:8px;line-height:10px;color:#cccccc;transform:scaleX(0.7403);">Geometry</span>
<span class="t" style="left:146.00px;top:-4.50px;font-size:8px;line-height:10px;color:#cccccc;transform:scaleX(0.7357);">Texture</span>
<span class="t" style="left:175.50px;top:-4.50px;font-size:8px;line-height:10px;color:#cccccc;transform:scaleX(0.7142);">Vertex Map</span>
<span class="t" style="left:213.80px;top:-4.50px;font-size:8px;line-height:10px;color:#cccccc;transform:scaleX(0.7156);">Animate</span>
<span class="t" style="left:244.20px;top:-4.50px;font-size:8px;line-height:10px;color:#cccccc;transform:scaleX(0.6692);">Dynamics</span>
<span class="t" style="left:278.00px;top:-4.50px;font-size:8px;line-height:10px;color:#cccccc;transform:scaleX(0.6861);">Render</span>
<span class="t" style="left:306.00px;top:-4.50px;font-size:8px;line-height:10px;color:#cccccc;transform:scaleX(0.7661);">Layout</span>
<span class="t" style="left:334.00px;top:-4.50px;font-size:8px;line-height:10px;color:#cccccc;transform:scaleX(0.6936);">System</span>
<span class="t" style="left:362.20px;top:-4.50px;font-size:8px;line-height:10px;color:#cccccc;transform:scaleX(0.6807);">Help</span>
<div class="b" style="left:-20.00px;top:8.40px;width:1064.00px;height:13.00px;background:#1b1b1b;"></div>
<div class="b" style="left:-20.00px;top:21.40px;width:1064.00px;height:1.20px;background:#555555;"></div>
<div class="b" style="left:-20.00px;top:22.60px;width:1064.00px;height:21.40px;background:#474747;"></div>
<svg class="b" style="left:3.40px;top:11.40px;" width="6.4" height="7.2" viewBox="0 0 6.4 7.2"><path d="M3.2 0.3L6 3H4.6V4L6 4 6 6.6H0.4V4H1.8V3H0.4Z" fill="#c4c4c4"/></svg>
<span class="t" style="left:19.50px;top:9.70px;font-size:8px;line-height:10px;color:#c4c8d0;transform:scaleX(0.7531);">Layouts</span>
<div class="b" style="left:277.50px;top:9.00px;width:39.10px;height:11.40px;background:#474747;"></div>
<span class="t" style="left:281.00px;top:9.90px;font-size:7px;line-height:9px;color:#5e5e5e;transform:scaleX(0.9524);">★</span>
<span class="t" style="left:289.50px;top:9.60px;font-size:8px;line-height:10px;color:#cccccc;transform:scaleX(0.6976);">Model</span>
<div class="b" style="left:277.50px;top:19.10px;width:39.10px;height:1.50px;background:#f0961a;"></div>
<div class="b" style="left:318.00px;top:9.00px;width:45.80px;height:11.40px;background:#474747;"></div>
<span class="t" style="left:321.50px;top:9.90px;font-size:7px;line-height:9px;color:#5e5e5e;transform:scaleX(0.9524);">★</span>
<span class="t" style="left:329.40px;top:9.60px;font-size:8px;line-height:10px;color:#cccccc;transform:scaleX(0.7214);">Topology</span>
<div class="b" style="left:365.30px;top:9.00px;width:39.40px;height:11.40px;background:#474747;"></div>
<span class="t" style="left:368.80px;top:9.90px;font-size:7px;line-height:9px;color:#5e5e5e;transform:scaleX(0.9524);">★</span>
<span class="t" style="left:377.00px;top:9.60px;font-size:8px;line-height:10px;color:#cccccc;transform:scaleX(0.6908);">UVEdit</span>
<div class="b" style="left:406.60px;top:9.00px;width:36.40px;height:11.40px;background:#474747;"></div>
<span class="t" style="left:410.10px;top:9.90px;font-size:7px;line-height:9px;color:#5e5e5e;transform:scaleX(0.9524);">★</span>
<span class="t" style="left:418.40px;top:9.60px;font-size:8px;line-height:10px;color:#cccccc;transform:scaleX(0.7459);">Paint</span>
<div class="b" style="left:444.00px;top:9.00px;width:41.20px;height:11.40px;background:#474747;"></div>
<span class="t" style="left:447.50px;top:9.90px;font-size:7px;line-height:9px;color:#5e5e5e;transform:scaleX(0.9524);">★</span>
<span class="t" style="left:456.00px;top:9.60px;font-size:8px;line-height:10px;color:#cccccc;transform:scaleX(0.7578);">Layout</span>
<div class="b" style="left:486.70px;top:9.00px;width:38.30px;height:11.40px;background:#474747;"></div>
<span class="t" style="left:490.20px;top:9.90px;font-size:7px;line-height:9px;color:#5e5e5e;transform:scaleX(0.9524);">★</span>
<span class="t" style="left:498.40px;top:9.60px;font-size:8px;line-height:10px;color:#cccccc;transform:scaleX(0.7367);">Setup</span>
<div class="b" style="left:526.30px;top:9.00px;width:44.70px;height:11.40px;background:#474747;"></div>
<span class="t" style="left:529.80px;top:9.90px;font-size:7px;line-height:9px;color:#5e5e5e;transform:scaleX(0.9524);">★</span>
<span class="t" style="left:538.30px;top:9.60px;font-size:8px;line-height:10px;color:#cccccc;transform:scaleX(0.7054);">Animate</span>
<div class="b" style="left:571.90px;top:9.00px;width:42.10px;height:11.40px;background:#474747;"></div>
<span class="t" style="left:575.40px;top:9.90px;font-size:7px;line-height:9px;color:#5e5e5e;transform:scaleX(0.9524);">★</span>
<span class="t" style="left:583.60px;top:9.60px;font-size:8px;line-height:10px;color:#cccccc;transform:scaleX(0.7128);">Render</span>
<div class="b" style="left:615.30px;top:9.00px;width:45.70px;height:11.40px;background:#474747;"></div>
<span class="t" style="left:618.80px;top:9.90px;font-size:7px;line-height:9px;color:#5e5e5e;transform:scaleX(0.9524);">★</span>
<span class="t" style="left:627.30px;top:9.60px;font-size:8px;line-height:10px;color:#cccccc;transform:scaleX(0.7036);">Scripting</span>
<div class="b" style="left:662.20px;top:9.00px;width:67.20px;height:11.40px;background:#474747;"></div>
<span class="t" style="left:665.70px;top:9.90px;font-size:7px;line-height:9px;color:#5e5e5e;transform:scaleX(0.9524);">★</span>
<span class="t" style="left:674.20px;top:9.60px;font-size:8px;line-height:10px;color:#cccccc;transform:scaleX(0.6889);">Schematic Fusion</span>
<svg class="b" style="left:734.00px;top:11.00px;" width="7" height="7" viewBox="0 0 7 7"><path d="M3.5 0.3V6.7M0.3 3.5H6.7" stroke="#f2f2f2" stroke-width="1.3" fill="none"/></svg>
<div class="b" style="left:974.20px;top:9.00px;width:35.80px;height:11.40px;background:#474747;"></div>
<span class="t" style="left:981.00px;top:8.90px;font-size:9px;line-height:11px;color:#e6e04a;transform:scaleX(1.0370);">★</span>
<span class="t" style="left:991.30px;top:9.60px;font-size:8px;line-height:10px;color:#cccccc;transform:scaleX(0.7417);">Only</span>
<svg class="b" style="left:1014.50px;top:9.50px;" width="10" height="10" viewBox="0 0 10 10"><path d="M6.80 5.00L8.60 5.00M6.27 6.27L7.55 7.55M5.00 6.80L5.00 8.60M3.73 6.27L2.45 7.55M3.20 5.00L1.40 5.00M3.73 3.73L2.45 2.45M5.00 3.20L5.00 1.40M6.27 3.73L7.55 2.45" stroke="#d0d0d0" stroke-width="1.25" fill="none"/><circle cx="5" cy="5" r="2.66" fill="#d0d0d0"/><circle cx="5" cy="5" r="1.08" fill="#2a2a2a"/></svg>
<div class="b" style="left:2.00px;top:26.40px;width:88.20px;height:14.60px;background:#595959;border-radius:3px;"></div>
<div class="b" style="left:46.00px;top:26.40px;width:0.60px;height:14.60px;background:#4b4b4b;"></div>
<svg class="b" style="left:3.00px;top:28.00px;" width="10" height="12" viewBox="0 0 10 12"><path d="M1 11L6.5 3.2" stroke="#bdbdbd" stroke-width="1.4" stroke-linecap="round"/><path d="M6 4L9 0.8" stroke="#2c2c2c" stroke-width="1.3" stroke-linecap="round"/></svg>
<span class="t" style="left:14.00px;top:29.90px;font-size:8px;line-height:10px;color:#cecece;transform:scaleX(0.7196);">Sculpt</span>
<svg class="b" style="left:47.50px;top:28.00px;" width="11" height="12" viewBox="0 0 11 12"><circle cx="5.3" cy="6" r="4.6" fill="#e9e9e9"/><path d="M5.6 2.2Q8.6 3 8.8 7.6Q6.6 6.6 5.6 2.2Z" fill="#1a1a1a"/></svg>
<span class="t" style="left:58.50px;top:29.90px;font-size:8px;line-height:10px;color:#cecece;transform:scaleX(0.7190);">Presets</span>
<span class="t" style="left:82.00px;top:29.90px;font-size:8px;line-height:10px;color:#7b7b7b;transform:scaleX(0.7177);">F6</span>
<div class="b" style="left:92.60px;top:23.00px;width:1.00px;height:21.00px;background:#3a3a3a;"></div>
<div class="b" style="left:97.20px;top:26.40px;width:168.00px;height:14.60px;background:#595959;border-radius:3px;"></div>
<svg class="b" style="left:98.20px;top:29.00px;" width="10.4" height="11.4" viewBox="0 0 10.4 11.4"><path d="M5.4 0.8L9.6 2.6V8.4L5.4 10.6L1.4 8.4V2.6Z" fill="#9dbfe6"/><path d="M5.4 4.6L9.6 2.6V8.4L5.4 10.6Z" fill="#6f9bd0"/><path d="M1.4 2.6L5.4 0.8L9.6 2.6L5.4 4.6Z" fill="#b9d3f0"/><circle cx="1.7" cy="5.8" r="1.6" fill="#f2a51e"/><circle cx="1.2" cy="1.8" r="0.8" fill="#f2a51e"/><circle cx="9.4" cy="1.8" r="0.8" fill="#f2a51e"/><circle cx="5.4" cy="10.6" r="0.8" fill="#f2a51e"/><circle cx="5.4" cy="4.4" r="0.7" fill="#f2a51e"/></svg>
<span class="t" style="left:109.00px;top:29.90px;font-size:8px;line-height:10px;color:#cecece;transform:scaleX(0.7426);">Convert</span>
<div class="b" style="left:139.15px;top:26.40px;width:0.60px;height:14.60px;background:#4b4b4b;"></div>
<svg class="b" style="left:140.50px;top:29.00px;" width="10.4" height="11.4" viewBox="0 0 10.4 11.4"><path d="M5.4 0.8L9.6 2.6V8.4L5.4 10.6L1.4 8.4V2.6Z" fill="#9dbfe6"/><path d="M5.4 4.6L9.6 2.6V8.4L5.4 10.6Z" fill="#6f9bd0"/><path d="M1.4 2.6L5.4 0.8L9.6 2.6L5.4 4.6Z" fill="#b9d3f0"/><path d="M1.4 2.6L5.4 4.6L9.6 2.6M5.4 4.6V10.6" stroke="#e6cf9c" stroke-width="1" fill="none"/><circle cx="1.7" cy="5.8" r="1.6" fill="#f2a51e"/></svg>
<span class="t" style="left:151.35px;top:29.90px;font-size:8px;line-height:10px;color:#cecece;transform:scaleX(0.7426);">Convert</span>
<div class="b" style="left:181.10px;top:26.40px;width:0.60px;height:14.60px;background:#4b4b4b;"></div>
<svg class="b" style="left:182.80px;top:29.00px;" width="10.4" height="11.4" viewBox="0 0 10.4 11.4"><path d="M5.4 0.8L9.6 2.6V8.4L5.4 10.6L1.4 8.4V2.6Z" fill="#9dbfe6"/><path d="M5.4 4.6L9.6 2.6V8.4L5.4 10.6Z" fill="#6f9bd0"/><path d="M1.4 2.6L5.4 0.8L9.6 2.6L5.4 4.6Z" fill="#b9d3f0"/><path d="M5.4 4.6L9.6 2.6V8.4L5.4 10.6Z" fill="#e2c894"/><circle cx="1.7" cy="5.8" r="1.6" fill="#f2a51e"/></svg>
<span class="t" style="left:193.70px;top:29.90px;font-size:8px;line-height:10px;color:#cecece;transform:scaleX(0.7426);">Convert</span>
<div class="b" style="left:223.05px;top:26.40px;width:0.60px;height:14.60px;background:#4b4b4b;"></div>
<svg class="b" style="left:225.10px;top:29.00px;" width="10.4" height="11.4" viewBox="0 0 10.4 11.4"><path d="M5.4 0.8L9.6 2.6V8.4L5.4 10.6L1.4 8.4V2.6Z" fill="#9dbfe6"/><path d="M5.4 4.6L9.6 2.6V8.4L5.4 10.6Z" fill="#6f9bd0"/><path d="M1.4 2.6L5.4 0.8L9.6 2.6L5.4 4.6Z" fill="#b9d3f0"/><path d="M5.4 0.8L9.6 2.6V8.4L5.4 10.6L1.4 8.4V2.6Z" fill="none" stroke="#e2c894" stroke-width="0.9"/><circle cx="1.7" cy="5.8" r="1.6" fill="#f2a51e"/></svg>
<span class="t" style="left:236.05px;top:29.90px;font-size:8px;line-height:10px;color:#cecece;transform:scaleX(0.7426);">Convert</span>
<div class="b" style="left:267.00px;top:26.40px;width:41.30px;height:14.60px;background:#f4a020;border-radius:2.5px;"></div>
<svg class="b" style="left:268.30px;top:29.00px;" width="10.4" height="11.4" viewBox="0 0 10.4 11.4"><path d="M5 0.6L9.4 2.6V8.4L5 10.6L0.6 8.4V2.6Z" fill="#a9c9ee" stroke="#e8eef8" stroke-width="0.7"/><path d="M5 4.8L9.4 2.6V8.4L5 10.6Z" fill="#7fa6d6"/><path d="M0.6 2.6L5 4.8L9.4 2.6M5 4.8V10.6" stroke="#eef2fa" stroke-width="0.8" fill="none"/></svg>
<span class="t" style="left:279.00px;top:29.90px;font-size:8px;line-height:10px;color:#3a2a10;transform:scaleX(0.7005);">Items</span>
<span class="t" style="left:303.80px;top:29.90px;font-size:8px;line-height:10px;color:#c98a2a;transform:scaleX(0.8317);">5</span>
<svg class="b" style="left:305.50px;top:38.50px;" width="3" height="3" viewBox="0 0 3 3"><path d="M3 0V3H0Z" fill="#2a2a2a"/></svg>
<div class="b" style="left:311.00px;top:26.40px;width:41.00px;height:14.60px;background:#f4a020;border-radius:2.5px;"></div>
<svg class="b" style="left:312.40px;top:29.00px;" width="11" height="11" viewBox="0 0 11 11"><circle cx="5.5" cy="5.5" r="4.1" fill="none" stroke="#8fd0a8" stroke-width="0.9"/><circle cx="5.5" cy="5.5" r="1.9" fill="none" stroke="#8fd0a8" stroke-width="0.7"/><path d="M5.5 0.4V10.6M0.4 5.5H10.6" stroke="#8fd0a8" stroke-width="0.6"/></svg>
<span class="t" style="left:322.80px;top:29.90px;font-size:8px;line-height:10px;color:#3a2a10;transform:scaleX(0.6536);">Local</span>
<div class="b" style="left:352.60px;top:26.40px;width:240.40px;height:14.60px;background:#595959;border-radius:3px;"></div>
<div class="b" style="left:404.60px;top:26.40px;width:0.60px;height:14.60px;background:#4b4b4b;"></div>
<div class="b" style="left:446.90px;top:26.40px;width:0.60px;height:14.60px;background:#4b4b4b;"></div>
<div class="b" style="left:489.40px;top:26.40px;width:0.60px;height:14.60px;background:#4b4b4b;"></div>
<div class="b" style="left:544.60px;top:26.40px;width:0.60px;height:14.60px;background:#4b4b4b;"></div>
<span class="t" style="left:365.00px;top:29.90px;font-size:8px;line-height:10px;color:#cecece;transform:scaleX(0.7182);">Options</span>
<svg class="b" style="left:405.80px;top:28.80px;" width="11" height="11" viewBox="0 0 11 11"><circle cx="5.5" cy="5.5" r="5" fill="#2f9ba0"/><circle cx="5.5" cy="5.5" r="3.4" fill="#4fd0d4"/><circle cx="5.5" cy="5.5" r="2.2" fill="#2f9ba0"/><circle cx="5.5" cy="5.5" r="1.1" fill="#b8ffff"/></svg>
<span class="t" style="left:417.20px;top:29.90px;font-size:8px;line-height:10px;color:#cecece;transform:scaleX(0.7302);">Falloff</span>
<span class="t" style="left:459.40px;top:29.90px;font-size:8px;line-height:10px;color:#cecece;transform:scaleX(0.7255);">Options</span>
<svg class="b" style="left:490.60px;top:28.60px;" width="10" height="12" viewBox="0 0 10 12"><circle cx="2.4" cy="3" r="1.9" fill="#9a9a9a"/><circle cx="7.6" cy="3" r="1.9" fill="#9a9a9a"/><circle cx="5" cy="9.6" r="1.9" fill="#b0b0b0"/><path d="M2.4 3L5 6.4L7.6 3M5 6.4V9.6" stroke="#8a8a8a" stroke-width="0.9" fill="none"/><path d="M2.6 7H7.4" stroke="#7fbfae" stroke-width="0.8"/></svg>
<span class="t" style="left:501.90px;top:29.90px;font-size:8px;line-height:10px;color:#7d7d7d;transform:scaleX(0.7097);">Select Through</span>
<svg class="b" style="left:547.30px;top:28.80px;" width="9" height="11" viewBox="0 0 9 11"><rect x="0" y="0" width="8.5" height="10.6" fill="#3c3c3c"/><path d="M2.3 1.6V6.3H7" stroke="#4fd6dc" stroke-width="1.3" fill="none"/><path d="M0 8.4H8.5" stroke="#555" stroke-width="0.6"/></svg>
<span class="t" style="left:558.60px;top:29.90px;font-size:8px;line-height:10px;color:#cecece;transform:scaleX(0.7014);">Work Plane</span>
<div class="b" style="left:92.40px;top:44.00px;width:1.60px;height:657.00px;background:#404040;"></div>
<div class="b" style="left:-20.00px;top:44.00px;width:114.00px;height:1.00px;background:#3a3a3a;"></div>
<div class="b" style="left:2.20px;top:48.80px;width:76.80px;height:22.80px;background:#595959;border-radius:3.5px;"></div>
<div class="b" style="left:21.00px;top:48.80px;width:0.60px;height:22.80px;background:#4b4b4b;"></div>
<div class="b" style="left:40.20px;top:48.80px;width:0.60px;height:22.80px;background:#4b4b4b;"></div>
<div class="b" style="left:59.30px;top:48.80px;width:0.60px;height:22.80px;background:#4b4b4b;"></div>
<div class="b" style="left:2.20px;top:75.00px;width:76.80px;height:22.60px;background:#595959;border-radius:3.5px;"></div>
<div class="b" style="left:21.00px;top:75.00px;width:0.60px;height:22.60px;background:#4b4b4b;"></div>
<div class="b" style="left:40.20px;top:75.00px;width:0.60px;height:22.60px;background:#4b4b4b;"></div>
<div class="b" style="left:59.30px;top:75.00px;width:0.60px;height:22.60px;background:#4b4b4b;"></div>
<div class="b" style="left:2.20px;top:118.00px;width:76.80px;height:22.60px;background:#595959;border-radius:3.5px;"></div>
<div class="b" style="left:21.00px;top:118.00px;width:0.60px;height:22.60px;background:#4b4b4b;"></div>
<div class="b" style="left:40.20px;top:118.00px;width:0.60px;height:22.60px;background:#4b4b4b;"></div>
<div class="b" style="left:59.30px;top:118.00px;width:0.60px;height:22.60px;background:#4b4b4b;"></div>
<svg class="b" style="left:0;top:0" width="94" height="100" viewBox="0 0 94 100"><defs><radialGradient id="sg" cx="0.36" cy="0.32" r="0.8"><stop offset="0" stop-color="#cfd2d4"/><stop offset="0.6" stop-color="#a4a8aa"/><stop offset="1" stop-color="#6e7072"/></radialGradient><linearGradient id="cg" x1="0" y1="0" x2="1" y2="0"><stop offset="0" stop-color="#c2c6c8"/><stop offset="0.6" stop-color="#a9adaf"/><stop offset="1" stop-color="#7c7e80"/></linearGradient><linearGradient id="kg" x1="0" y1="0" x2="1" y2="0"><stop offset="0" stop-color="#d9dcdd"/><stop offset="0.55" stop-color="#bfc2c4"/><stop offset="1" stop-color="#8e9092"/></linearGradient><radialGradient id="sh" cx="0.5" cy="0.5" r="0.5"><stop offset="0" stop-color="#2e2e2e" stop-opacity="0.55"/><stop offset="1" stop-color="#2e2e2e" stop-opacity="0"/></radialGradient></defs><ellipse cx="13" cy="63" rx="5.2" ry="5.6" fill="url(#sh)"/><ellipse cx="32.4" cy="63" rx="5.2" ry="5.6" fill="url(#sh)"/><ellipse cx="51.6" cy="63" rx="5.2" ry="5.6" fill="url(#sh)"/><ellipse cx="71.5" cy="64" rx="5.2" ry="5.6" fill="url(#sh)"/><ellipse cx="13" cy="89" rx="5.2" ry="5.6" fill="url(#sh)"/><ellipse cx="32.5" cy="89" rx="5.2" ry="5.6" fill="url(#sh)"/><path d="M4.3 56.4L9.6 54.4L15 56.2L14.4 65.2L10.4 67.7L4.9 65.6Z" fill="#b4b8ba"/><path d="M4.3 56.4L9.6 54.4L15 56.2L10.2 58.2Z" fill="#c9cccd"/><path d="M10.2 58.2L15 56.2L14.4 65.2L10.4 67.7Z" fill="#8f9294"/><ellipse cx="29.5" cy="60.8" rx="4.8" ry="5.7" fill="url(#sg)"/><path d="M39.6 70.6h-2.2l2.2 -2.2z" fill="#2b2b2b"/><path d="M44 56.2L44.9 65.6Q48.4 68.4 52.2 65.6L53.3 56.2Z" fill="url(#cg)"/><ellipse cx="48.65" cy="56.2" rx="4.65" ry="1.8" fill="#c4c7c9"/><path d="M58.8 70.6h-2.2l2.2 -2.2z" fill="#2b2b2b"/><path d="M68.6 54.8L73.3 65.9Q68.9 69.6 64.6 65.9Z" fill="url(#kg)"/><ellipse cx="10" cy="86.2" rx="3.6" ry="5.2" fill="none" stroke="#b9bcbe" stroke-width="3.1" transform="rotate(-22 10 86.2)"/><ellipse cx="9.4" cy="85.6" rx="3.3" ry="4.9" fill="none" stroke="#d2d4d5" stroke-width="1.1" transform="rotate(-22 10 86.2)"/><path d="M28 80.2Q24.6 81.8 26.4 84.8Q29 86.8 33 85.4" fill="none" stroke="#c6c8ca" stroke-width="2" stroke-linecap="round"/><path d="M33.4 87Q26.2 85.8 25.8 89.2Q26.4 92.6 32.4 91.8" fill="none" stroke="#c6c8ca" stroke-width="2.4" stroke-linecap="round"/><path d="M39.6 96.2h-2.2l2.2 -2.2z" fill="#2b2b2b"/><path d="M43.5 85Q46.6 80.4 49.8 79.6Q53 82 56 93.4" fill="none" stroke="#6f957f" stroke-width="0.7"/><rect x="42.7" y="84.2" width="1.7" height="1.7" fill="#83b897"/><rect x="48.9" y="78.7" width="1.9" height="1.9" fill="#83b897"/><rect x="55" y="92.4" width="2" height="2" fill="#83b897"/><path d="M58.8 96.2h-2.2l2.2 -2.2z" fill="#2b2b2b"/></svg>
<span class="t" style="left:63.20px;top:77.30px;font-size:14px;line-height:16px;color:#c8c8c8;transform:scaleX(0.6960);">A</span>
<span class="t" style="left:67.00px;top:83.10px;font-size:13px;line-height:15px;color:#74a28c;transform:scaleX(0.9226);font-family:'Liberation Serif',serif;-webkit-text-stroke:0;">&amp;</span>
<svg class="b" style="left:0;top:100px" width="94" height="45" viewBox="0 100 94 45"><circle cx="11.1" cy="131.4" r="5.8" fill="#4a4a4a"/><ellipse cx="11.1" cy="131" rx="4.6" ry="5.6" fill="#7c7c7c" opacity="0.8"/><path d="M11.3 122.6V131.2L5.4 135M11.3 131.2L17 135" stroke="#d8d8d8" stroke-width="0.6" fill="none"/><path d="M10.4 123.4Q5.6 127.4 5.6 134" stroke="#d85a60" stroke-width="1" fill="none"/><path d="M12.4 123.4Q17 127.4 17 134" stroke="#8b95d6" stroke-width="1" fill="none"/><path d="M7 134.6Q11.3 137 15.6 134.6" stroke="#3fce46" stroke-width="1.6" fill="none"/><circle cx="11.4" cy="121.9" r="1.7" fill="#49d84e"/><circle cx="5" cy="134.8" r="1.8" fill="#b4b8f0"/><circle cx="17.4" cy="134.8" r="1.8" fill="#f06c74"/><ellipse cx="31.6" cy="136.8" rx="5.6" ry="2.2" fill="#2e2e2e" opacity="0.5"/><path d="M25 122.8L37.3 123.4L36.6 137.8L25.2 136.2Z" fill="#7084c0"/><path d="M25 125.2L37.2 125.8M25 127.6L37.1 128.2M25.1 130L37 130.6M25.1 132.4L36.9 133M25.2 134.6L36.8 135.4M27.2 122.9L27.3 136.5M29.4 123L29.5 136.8M31.6 123.1L31.6 137.1M33.8 123.2L33.7 137.4M35.8 123.3L35.6 137.7" stroke="#c8d2f2" stroke-width="0.55"/><path d="M28.4 123.6L35.8 124L35.6 129.8L28.6 129.4Z" fill="#e4eafa" opacity="0.55"/><path d="M43.6 129L51.2 121.9L57.2 124.4L57 134.4L48.2 139.2Z" fill="#1d9a48"/><path d="M43.6 129L51.2 121.9L57.2 124.4L49.6 131Z" fill="#35b866"/><path d="M49.6 131L57.2 124.4L57 134.4L48.2 139.2Z" fill="#168440"/><path d="M45.6 128.2L47.8 126.2L50 127.2L47.8 129.2ZM50.6 125L52.6 123.2L54.6 124L52.6 125.8ZM46 132.6L48 133.8L47.8 136.4L46.2 135ZM50.4 131.8L52.6 130L52.6 133L50.4 134.6ZM54.6 128.2L56.6 126.6L56.4 129.4L54.6 131ZM52.4 134.6L54.6 133L54.4 135.6L52.4 137Z" fill="#c2e6d2" opacity="0.85"/><path d="M59 140.2h-2.2l2.2 -2.2z" fill="#2b2b2b"/><path d="M67.8 123L71 123L74.2 137.4L63.8 136.6Z" fill="#8094d8"/><path d="M67.2 125.2H71.6M66.6 127.4H72M66 129.6H72.6M65.4 131.8H73M64.8 134H73.6M64.2 136H74" stroke="#cdd6f6" stroke-width="0.7"/><path d="M78.4 140.2h-2.2l2.2 -2.2z" fill="#2b2b2b"/></svg>
<div class="b" style="left:2.20px;top:100.50px;width:76.80px;height:14.50px;background:#595959;border-radius:3.5px;"></div>
<span class="t" style="left:5.10px;top:103.00px;font-size:8px;line-height:10px;color:#cecece;transform:scaleX(0.7288);">Item Menu: New Item</span>
<svg class="b" style="left:71.50px;top:106.20px;" width="5" height="3.6" viewBox="0 0 5 3.6"><path d="M0.2 0.3H4.8L2.5 3.4Z" fill="#ececec"/></svg>
<div class="b" style="left:2.20px;top:144.00px;width:76.80px;height:29.80px;background:#595959;border-radius:3.5px;"></div>
<div class="b" style="left:2.20px;top:159.10px;width:76.80px;height:0.60px;background:#4b4b4b;"></div>
<span class="t" style="left:4.40px;top:146.70px;font-size:8px;line-height:10px;color:#cecece;transform:scaleX(0.7163);">More Transforms</span>
<svg class="b" style="left:71.50px;top:149.60px;" width="5" height="3.6" viewBox="0 0 5 3.6"><path d="M0.2 0.3H4.8L2.5 3.4Z" fill="#ececec"/></svg>
<span class="t" style="left:4.40px;top:162.00px;font-size:8px;line-height:10px;color:#cecece;transform:scaleX(0.7252);">Center Selected</span>
<svg class="b" style="left:71.50px;top:164.80px;" width="5" height="3.6" viewBox="0 0 5 3.6"><path d="M0.2 0.3H4.8L2.5 3.4Z" fill="#ececec"/></svg>
<div class="b" style="left:3.00px;top:177.40px;width:77.00px;height:0.80px;background:#3a3a3a;"></div>
<div class="b" style="left:2.20px;top:182.00px;width:76.80px;height:29.60px;background:#595959;border-radius:3.5px;"></div>
<div class="b" style="left:2.20px;top:196.50px;width:76.80px;height:0.60px;background:#4b4b4b;"></div>
<svg class="b" style="left:3.00px;top:183.50px;" width="11" height="13" viewBox="0 0 11 13"><path d="M0.9 5.4L5.4 11.4" stroke="#dcdcdc" stroke-width="1.3" stroke-linecap="round"/><path d="M4.2 6.8V2.6L5.5 3.8L8.4 0.6L9.9 2.1L6.9 5.2L8.2 6.6Z" fill="#23e28a"/></svg>
<span class="t" style="left:14.00px;top:185.00px;font-size:8px;line-height:10px;color:#cecece;transform:scaleX(0.6991);">Snaps and Precision</span>
<svg class="b" style="left:3.50px;top:198.50px;" width="10" height="12" viewBox="0 0 10 12"><path d="M1.5 1L5 0.5L9 8.5L6 11.2L2 7.5Z" fill="#8fd0f0"/><ellipse cx="3.6" cy="7.2" rx="2.3" ry="2.7" fill="#0d3f7a"/></svg>
<span class="t" style="left:14.00px;top:200.60px;font-size:8px;line-height:10px;color:#cecece;transform:scaleX(0.7182);">Mesh Constraints</span>
<div class="b" style="left:2.20px;top:216.00px;width:76.80px;height:10.00px;background:#3c3c3c;border-radius:3.5px;"></div>
<svg class="b" style="left:3.50px;top:218.60px;" width="5" height="5" viewBox="0 0 5 5"><path d="M0.4 0.6H4.6L2.5 4.4Z" fill="#5a5a5a"/></svg>
<span class="t" style="left:10.00px;top:215.90px;font-size:8px;line-height:10px;color:#cecece;transform:scaleX(0.7232);">Add Geometry</span>
<div class="b" style="left:2.20px;top:228.00px;width:76.80px;height:105.20px;background:#595959;border-radius:3.5px;"></div>
<span class="t" style="left:14.00px;top:231.60px;font-size:8px;line-height:10px;color:#cecece;transform:scaleX(0.6837);">SDS Subdivide 2X</span>
<svg class="b" style="left:3.20px;top:230.20px;" width="10.4" height="12" viewBox="0 0 10.4 12"><rect x="1" y="0.6" width="5.6" height="5.6" fill="#6f8ecf" opacity="0.9"/><circle cx="6.4" cy="7.4" r="3.8" fill="#8ea2e0"/><circle cx="5.6" cy="6.4" r="1.6" fill="#c6d2f4"/></svg>
<div class="b" style="left:2.20px;top:242.73px;width:76.80px;height:0.60px;background:#4b4b4b;"></div>
<span class="t" style="left:14.00px;top:246.63px;font-size:8px;line-height:10px;color:#818181;transform:scaleX(0.7078);">Polygon Bevel</span>
<span class="t" style="left:60.20px;top:246.63px;font-size:8px;line-height:10px;color:#767676;transform:scaleX(0.6998);">Shift-B</span>
<svg class="b" style="left:3.20px;top:245.23px;opacity:0.75;" width="10.4" height="12" viewBox="0 0 10.4 12"><path d="M1.4 3L5.6 1.2L9 3V8.6L5 11L1.4 8.8Z" fill="#b4b4b4"/><path d="M5 5L9 3V8.6L5 11Z" fill="#8fb79e"/><path d="M1.4 3L5.6 1.2L9 3L5 5Z" fill="#d2d2d2"/></svg>
<div class="b" style="left:2.20px;top:257.76px;width:76.80px;height:0.60px;background:#4b4b4b;"></div>
<span class="t" style="left:14.00px;top:261.66px;font-size:8px;line-height:10px;color:#818181;transform:scaleX(0.7617);">Extrude</span>
<span class="t" style="left:60.20px;top:261.66px;font-size:8px;line-height:10px;color:#767676;transform:scaleX(0.6998);">Shift-X</span>
<svg class="b" style="left:3.20px;top:260.26px;opacity:0.75;" width="10.4" height="12" viewBox="0 0 10.4 12"><path d="M1.4 3L5.6 1.2L9 3V8.6L5 11L1.4 8.8Z" fill="#b4b4b4"/><path d="M5 5L9 3V8.6L5 11Z" fill="#8fb79e"/><path d="M1.4 3L5.6 1.2L9 3L5 5Z" fill="#d2d2d2"/></svg>
<div class="b" style="left:2.20px;top:272.79px;width:76.80px;height:0.60px;background:#4b4b4b;"></div>
<span class="t" style="left:14.00px;top:276.69px;font-size:8px;line-height:10px;color:#818181;transform:scaleX(0.7092);">Bridge</span>
<svg class="b" style="left:3.20px;top:275.29px;opacity:0.75;" width="10.4" height="12" viewBox="0 0 10.4 12"><path d="M2.4 1.4Q8.6 1 8.2 10.6H5.4Q5.6 4.6 2.4 4.4Z" fill="#bcd4c2"/><path d="M2.4 1.4Q5.4 1.4 6.6 3.6L5 5.4Q4 4.4 2.4 4.4Z" fill="#e0e0e0"/><path d="M5.4 10.6H8.2V8H5.4Z" fill="#ececec"/></svg>
<div class="b" style="left:2.20px;top:287.82px;width:76.80px;height:0.60px;background:#4b4b4b;"></div>
<span class="t" style="left:14.00px;top:291.72px;font-size:8px;line-height:10px;color:#818181;transform:scaleX(0.6798);">Edge Slice</span>
<svg class="b" style="left:3.20px;top:290.32px;opacity:0.75;" width="10.4" height="12" viewBox="0 0 10.4 12"><path d="M1.4 3L5.6 1.2L9 3V8.6L5 11L1.4 8.8Z" fill="#b4b4b4"/><path d="M5 5L9 3V8.6L5 11Z" fill="#8fb79e"/><path d="M1.4 3L5.6 1.2L9 3L5 5Z" fill="#d2d2d2"/></svg>
<div class="b" style="left:2.20px;top:302.85px;width:76.80px;height:0.60px;background:#4b4b4b;"></div>
<span class="t" style="left:14.00px;top:306.75px;font-size:8px;line-height:10px;color:#818181;transform:scaleX(0.7271);">Smooth Shift</span>
<svg class="b" style="left:3.20px;top:305.35px;opacity:0.75;" width="10.4" height="12" viewBox="0 0 10.4 12"><path d="M1 6.4L3 5.2V2.2L5.2 1.2L8 2.2V5.2L9.8 6.4V8.4L5.4 11L1 8.4Z" fill="#bdbdbd"/><path d="M1 8.4L5.4 11L9.8 8.4V7.4L5.4 9.8L1 7.4Z" fill="#78b890"/><path d="M3 3.4H8M3 4.6H8" stroke="#8a8a8a" stroke-width="0.5"/></svg>
<div class="b" style="left:2.20px;top:317.88px;width:76.80px;height:0.60px;background:#4b4b4b;"></div>
<span class="t" style="left:14.00px;top:321.78px;font-size:8px;line-height:10px;color:#818181;transform:scaleX(0.7140);">Thicken</span>
<svg class="b" style="left:3.20px;top:320.38px;opacity:0.75;" width="10.4" height="12" viewBox="0 0 10.4 12"><path d="M2 2.4L8.4 0.8V8.8L2 11Z" fill="#cfcfcf"/><path d="M3.4 3.8L7 2.8V7.8L3.4 9Z" fill="#595959"/><path d="M2 2.4V11" stroke="#78b890" stroke-width="1"/></svg>
<div class="b" style="left:3.00px;top:337.60px;width:77.00px;height:0.80px;background:#3a3a3a;"></div>
<div class="b" style="left:2.20px;top:341.50px;width:76.80px;height:14.30px;background:#595959;border-radius:3.5px;"></div>
<span class="t" style="left:4.40px;top:344.00px;font-size:8px;line-height:10px;color:#cecece;transform:scaleX(0.7690);">Edit</span>
<svg class="b" style="left:71.50px;top:346.90px;" width="5" height="3.6" viewBox="0 0 5 3.6"><path d="M0.2 0.3H4.8L2.5 3.4Z" fill="#ececec"/></svg>
<div class="b" style="left:-20.00px;top:387.30px;width:113.00px;height:1.00px;background:#3a3a3a;"></div>
<div class="b" style="left:-20.00px;top:388.30px;width:113.00px;height:0.70px;background:#505050;"></div>
<div class="b" style="left:82.20px;top:48.00px;width:9.00px;height:26.00px;background:#f4a020;border-radius:3px 3px 3px 3px;"></div>
<span class="t" style="left:91.20px;top:51.00px;font-size:8px;line-height:10px;color:#4a2e08;transform-origin:0 0;transform:rotate(90deg) scaleX(0.8486);">Basic</span>
<div class="b" style="left:82.20px;top:74.90px;width:9.00px;height:36.20px;background:#4f4f4f;border-radius:2px;"></div>
<span class="t" style="left:91.10px;top:77.60px;font-size:8px;line-height:10px;color:#b6b6b6;transform-origin:0 0;transform:rotate(90deg) scaleX(0.8770);">Deform</span>
<div class="b" style="left:82.20px;top:111.40px;width:9.00px;height:38.70px;background:#4f4f4f;border-radius:2px;"></div>
<span class="t" style="left:91.10px;top:112.50px;font-size:8px;line-height:10px;color:#b6b6b6;transform-origin:0 0;transform:rotate(90deg) scaleX(0.9265);">Duplicate</span>
<div class="b" style="left:82.20px;top:150.40px;width:9.00px;height:41.70px;background:#4f4f4f;border-radius:2px;"></div>
<span class="t" style="left:91.10px;top:152.40px;font-size:8px;line-height:10px;color:#b6b6b6;transform-origin:0 0;transform:rotate(90deg) scaleX(0.8716);">Mesh Edit</span>
<div class="b" style="left:82.20px;top:192.40px;width:9.00px;height:32.70px;background:#4f4f4f;border-radius:2px;"></div>
<span class="t" style="left:91.10px;top:195.00px;font-size:8px;line-height:10px;color:#b6b6b6;transform-origin:0 0;transform:rotate(90deg) scaleX(0.9039);">Vertex</span>
<div class="b" style="left:82.20px;top:225.40px;width:9.00px;height:22.70px;background:#4f4f4f;border-radius:2px;"></div>
<span class="t" style="left:91.10px;top:226.20px;font-size:8px;line-height:10px;color:#b6b6b6;transform-origin:0 0;transform:rotate(90deg) scaleX(0.9206);">Edge</span>
<div class="b" style="left:82.20px;top:248.40px;width:9.00px;height:37.70px;background:#4f4f4f;border-radius:2px;"></div>
<span class="t" style="left:91.10px;top:254.50px;font-size:8px;line-height:10px;color:#b6b6b6;transform-origin:0 0;transform:rotate(90deg) scaleX(0.8821);">Polygon</span>
<div class="b" style="left:82.20px;top:286.40px;width:9.00px;height:23.70px;background:#4f4f4f;border-radius:2px;"></div>
<span class="t" style="left:91.10px;top:289.40px;font-size:8px;line-height:10px;color:#b6b6b6;transform-origin:0 0;transform:rotate(90deg) scaleX(0.8278);">UV</span>
<div class="b" style="left:82.20px;top:310.40px;width:9.00px;height:32.50px;background:#4f4f4f;border-radius:2px;"></div>
<span class="t" style="left:91.10px;top:314.00px;font-size:8px;line-height:10px;color:#b6b6b6;transform-origin:0 0;transform:rotate(90deg) scaleX(0.8538);">Fusion</span>
<div class="b" style="left:863.40px;top:44.00px;width:180.60px;height:657.00px;background:#494949;"></div>
<div class="b" style="left:863.40px;top:44.00px;width:180.60px;height:13.40px;background:#272727;"></div>
<div class="b" style="left:863.40px;top:57.40px;width:180.60px;height:0.80px;background:#505050;"></div>
<svg class="b" style="left:864.60px;top:49.00px;" width="5" height="5" viewBox="0 0 5 5"><circle cx="2.3" cy="2.5" r="2" fill="#0c0c0c"/><circle cx="3" cy="1.8" r="0.7" fill="#4a4a4a"/></svg>
<div class="b" style="left:872.60px;top:46.80px;width:28.10px;height:11.20px;background:#484848;border-radius:4px 4px 0 0;box-shadow:inset 0 0.7px 0 #5a5a5a;"></div>
<span class="t" style="left:876.20px;top:47.60px;font-size:8px;line-height:10px;color:#f39c1f;transform:scaleX(0.8631);">Item ...</span>
<div class="b" style="left:903.00px;top:47.40px;width:28.20px;height:10.00px;background:#3b3b3b;border-radius:4px 4px 0 0;"></div>
<span class="t" style="left:907.00px;top:47.80px;font-size:8px;line-height:10px;color:#9e9e9e;transform:scaleX(0.6915);">Shading</span>
<div class="b" style="left:934.00px;top:47.40px;width:27.70px;height:10.00px;background:#3b3b3b;border-radius:4px 4px 0 0;"></div>
<span class="t" style="left:938.20px;top:47.80px;font-size:8px;line-height:10px;color:#9e9e9e;transform:scaleX(0.7167);">Groups</span>
<div class="b" style="left:964.80px;top:47.40px;width:27.20px;height:10.00px;background:#3b3b3b;border-radius:4px 4px 0 0;"></div>
<span class="t" style="left:968.40px;top:47.80px;font-size:8px;line-height:10px;color:#9e9e9e;transform:scaleX(0.7243);">Images</span>
<span class="t" style="left:994.80px;top:47.60px;font-size:8px;line-height:10px;color:#7c7c7c;transform:scaleX(0.8561);">+</span>
<svg class="b" style="left:1003.50px;top:47.00px;" width="9" height="9" viewBox="0 0 9 9"><path d="M4.9 4.3L7 2.2" stroke="#c4c4c4" stroke-width="1"/><path d="M4.8 0.8H8.2V4.2Z" fill="#c4c4c4"/><path d="M1 4.8V8.2H4.4Z" fill="#c4c4c4"/><path d="M2.2 7L3.6 5.6" stroke="#c4c4c4" stroke-width="1"/></svg>
<svg class="b" style="left:1012.00px;top:46.60px;" width="10" height="10" viewBox="0 0 10 10"><path d="M6.65 5.00L8.30 5.00M6.17 6.17L7.33 7.33M5.00 6.65L5.00 8.30M3.83 6.17L2.67 7.33M3.35 5.00L1.70 5.00M3.83 3.83L2.67 2.67M5.00 3.35L5.00 1.70M6.17 3.83L7.33 2.67" stroke="#bdbdbd" stroke-width="1.25" fill="none"/><circle cx="5" cy="5" r="2.44" fill="#bdbdbd"/><circle cx="5" cy="5" r="0.99" fill="#2a2a2a"/></svg>
<div class="b" style="left:866.20px;top:61.30px;width:67.80px;height:10.70px;background:#5c5c5c;border-radius:3px;"></div>
<span class="t" style="left:867.20px;top:61.80px;font-size:8px;line-height:10px;color:#c8c8c8;transform:scaleX(0.7281);">Filter Items</span>
<div class="b" style="left:936.80px;top:61.30px;width:67.60px;height:10.70px;background:#5c5c5c;border-radius:3px;"></div>
<span class="t" style="left:939.00px;top:61.80px;font-size:8px;line-height:10px;color:#cecece;transform:scaleX(0.7497);">Add Item</span>
<svg class="b" style="left:997.60px;top:65.20px;" width="5" height="3.6" viewBox="0 0 5 3.6"><path d="M0.2 0.3H4.8L2.5 3.4Z" fill="#ececec"/></svg>
<div class="b" style="left:1006.80px;top:61.30px;width:8.20px;height:10.70px;background:#5c5c5c;border-radius:3px;"></div>
<span class="t" style="left:1009.00px;top:61.80px;font-size:8px;line-height:10px;color:#cecece;transform:scaleX(0.6746);">S</span>
<div class="b" style="left:1017.50px;top:61.30px;width:10.50px;height:10.70px;background:#5c5c5c;border-radius:3px;"></div>
<span class="t" style="left:1019.60px;top:61.80px;font-size:8px;line-height:10px;color:#cecece;transform:scaleX(0.6958);">F</span>
<div class="b" style="left:866.00px;top:75.00px;width:153.00px;height:265.00px;background:#8d969f;"></div>
<div class="b" style="left:866.00px;top:75.00px;width:153.00px;height:12.90px;background:#5b7188;"></div>
<div class="b" style="left:866.00px;top:87.60px;width:153.00px;height:0.60px;background:#6f7f90;"></div>
<div class="b" style="left:878.30px;top:75.00px;width:0.60px;height:265.00px;background:#7b848d;"></div>
<div class="b" style="left:878.30px;top:75.00px;width:0.60px;height:12.90px;background:#4d6177;"></div>
<div class="b" style="left:892.10px;top:75.00px;width:0.60px;height:265.00px;background:#7b848d;"></div>
<div class="b" style="left:892.10px;top:75.00px;width:0.60px;height:12.90px;background:#4d6177;"></div>
<div class="b" style="left:905.40px;top:75.00px;width:0.60px;height:265.00px;background:#7b848d;"></div>
<div class="b" style="left:905.40px;top:75.00px;width:0.60px;height:12.90px;background:#4d6177;"></div>
<span class="t" style="left:913.70px;top:76.60px;font-size:8px;line-height:10px;color:#a9bccd;transform:scaleX(0.6608);">Name</span>
<svg class="b" style="left:868.20px;top:78.20px;" width="6" height="6.4" viewBox="0 0 6 6.4"><circle cx="3" cy="3" r="2.6" fill="#1d2024"/><circle cx="2.6" cy="2.4" r="1" fill="#8a929a"/><path d="M1.6 5.4H4.4" stroke="#1d2024" stroke-width="0.8"/></svg>
<svg class="b" style="left:881.00px;top:77.00px;" width="9" height="9" viewBox="0 0 9 9"><path d="M4.6 0.6L5.6 3.4L8.4 3L5.8 5L4.4 8.4L3.8 5.4L0.8 5.6L3.6 3.8Z" fill="#e4e4e4"/></svg>
<svg class="b" style="left:895.00px;top:76.60px;" width="9" height="9" viewBox="0 0 9 9"><path d="M4.5 4.6V1.2M4.5 4.6L1.4 7M4.5 4.6L7.8 6.8" stroke="#ddd" stroke-width="0.6"/><circle cx="4.5" cy="1.6" r="1.3" fill="#3fc860"/><circle cx="1.8" cy="6.6" r="1.4" fill="#5a7ae0"/><circle cx="7.2" cy="6.6" r="1.4" fill="#e04848"/></svg>
<svg class="b" style="left:868.20px;top:90.40px;" width="6" height="6.4" viewBox="0 0 6 6.4"><circle cx="3" cy="3" r="2.6" fill="#1d2024"/><circle cx="2.6" cy="2.4" r="1" fill="#8a929a"/><path d="M1.6 5.4H4.4" stroke="#1d2024" stroke-width="0.8"/></svg>
<svg class="b" style="left:868.20px;top:102.20px;" width="6" height="6.4" viewBox="0 0 6 6.4"><circle cx="3" cy="3" r="2.6" fill="#1d2024"/><circle cx="2.6" cy="2.4" r="1" fill="#8a929a"/><path d="M1.6 5.4H4.4" stroke="#1d2024" stroke-width="0.8"/></svg>
<svg class="b" style="left:868.20px;top:114.50px;" width="6" height="6.4" viewBox="0 0 6 6.4"><circle cx="3" cy="3" r="2.6" fill="#1d2024"/><circle cx="2.6" cy="2.4" r="1" fill="#8a929a"/><path d="M1.6 5.4H4.4" stroke="#1d2024" stroke-width="0.8"/></svg>
<svg class="b" style="left:907.00px;top:90.00px;" width="12" height="32" viewBox="0 0 12 32"><path d="M1.2 2.2H4.6L2.9 5.6Z" fill="#4a5058"/><path d="M2.9 6V27.8H7M2.9 15.8H7" stroke="#727a82" stroke-width="0.6" fill="none"/></svg>
<svg class="b" style="left:919.00px;top:89.20px;" width="8" height="9" viewBox="0 0 8 9"><path d="M0.8 3.2L6.8 1L7.2 2.4L1.2 4.6Z" fill="#222"/><rect x="0.8" y="4.6" width="6.2" height="3.6" fill="#1c1c1c"/><path d="M2 2.6L3 3.8M4 1.9L5 3.1" stroke="#ddd" stroke-width="0.7"/></svg>
<span class="t" style="left:927.60px;top:88.60px;font-size:8px;line-height:10px;color:#15181c;transform:scaleX(0.8393);font-weight:bold;">Untitled*</span>
<svg class="b" style="left:926.00px;top:101.40px;" width="7" height="8" viewBox="0 0 7 8"><circle cx="3.4" cy="4" r="2.9" fill="#e8e8e8" stroke="#333" stroke-width="0.6"/><path d="M3.2 2.6H6V6H3.2Z" fill="#222"/></svg>
<span class="t" style="left:933.90px;top:100.50px;font-size:8px;line-height:10px;color:#15181c;transform:scaleX(0.6713);">Camera</span>
<svg class="b" style="left:925.60px;top:112.80px;" width="7" height="9" viewBox="0 0 7 9"><path d="M1 2.6L3.4 1L5.8 2.6V5.4L3.4 7L1 5.4Z" fill="#f4f4f4" stroke="#333" stroke-width="0.5"/><path d="M3 4.2H5.6V8.4H3Z" fill="#f0e86a"/></svg>
<span class="t" style="left:933.00px;top:112.80px;font-size:8px;line-height:10px;color:#15181c;transform:scaleX(0.7218);">Directional Light</span>
<div class="b" style="left:1019.00px;top:75.00px;width:4.00px;height:265.00px;background:#535353;"></div>
<div class="b" style="left:866.00px;top:340.00px;width:153.00px;height:9.30px;background:#474747;border-radius:0 0 3px 3px;"></div>
<div class="b" style="left:866.00px;top:340.40px;width:41.60px;height:8.90px;background:#5d5d5d;border-radius:0 0 3px 3px;"></div>
<svg class="b" style="left:885.00px;top:342.60px;" width="4" height="4" viewBox="0 0 4 4"><circle cx="2" cy="2" r="1.2" fill="#3c3c3c"/></svg>
<div class="b" style="left:863.40px;top:352.30px;width:180.60px;height:13.20px;background:#272727;"></div>
<div class="b" style="left:863.40px;top:365.50px;width:180.60px;height:0.70px;background:#505050;"></div>
<svg class="b" style="left:864.60px;top:357.00px;" width="5" height="5" viewBox="0 0 5 5"><circle cx="2.3" cy="2.5" r="2" fill="#0c0c0c"/><circle cx="3" cy="1.8" r="0.7" fill="#4a4a4a"/></svg>
<div class="b" style="left:872.40px;top:355.00px;width:32.80px;height:11.20px;background:#484848;border-radius:4px 4px 0 0;box-shadow:inset 0 0.7px 0 #5a5a5a;"></div>
<span class="t" style="left:874.90px;top:355.80px;font-size:8px;line-height:10px;color:#f39c1f;transform:scaleX(0.7406);">Properties</span>
<div class="b" style="left:908.00px;top:355.60px;width:29.00px;height:9.90px;background:#3b3b3b;border-radius:4px 4px 0 0;"></div>
<span class="t" style="left:910.60px;top:356.00px;font-size:8px;line-height:10px;color:#9e9e9e;transform:scaleX(0.7042);">Channels</span>
<div class="b" style="left:940.40px;top:355.60px;width:27.90px;height:9.90px;background:#3b3b3b;border-radius:4px 4px 0 0;"></div>
<span class="t" style="left:947.80px;top:356.00px;font-size:8px;line-height:10px;color:#9e9e9e;transform:scaleX(0.7174);">Lists</span>
<span class="t" style="left:970.80px;top:355.80px;font-size:8px;line-height:10px;color:#7c7c7c;transform:scaleX(0.8561);">+</span>
<svg class="b" style="left:1003.10px;top:355.10px;" width="9" height="9" viewBox="0 0 9 9"><path d="M4.9 4.3L7 2.2" stroke="#c4c4c4" stroke-width="1"/><path d="M4.8 0.8H8.2V4.2Z" fill="#c4c4c4"/><path d="M1 4.8V8.2H4.4Z" fill="#c4c4c4"/><path d="M2.2 7L3.6 5.6" stroke="#c4c4c4" stroke-width="1"/></svg>
<svg class="b" style="left:1011.30px;top:354.80px;" width="10" height="10" viewBox="0 0 10 10"><path d="M6.65 5.00L8.30 5.00M6.17 6.17L7.33 7.33M5.00 6.65L5.00 8.30M3.83 6.17L2.67 7.33M3.35 5.00L1.70 5.00M3.83 3.83L2.67 2.67M5.00 3.35L5.00 1.70M6.17 3.83L7.33 2.67" stroke="#bdbdbd" stroke-width="1.25" fill="none"/><circle cx="5" cy="5" r="2.44" fill="#bdbdbd"/><circle cx="5" cy="5" r="0.99" fill="#2a2a2a"/></svg>
<div class="b" style="left:863.40px;top:660.00px;width:180.60px;height:1.00px;background:#333333;"></div>
<div class="b" style="left:863.40px;top:661.00px;width:180.60px;height:1.00px;background:#525252;"></div>
<div class="b" style="left:873.70px;top:667.90px;width:136.30px;height:16.10px;background:#8f98a3;border-radius:3px;"></div>
<span class="t" style="left:866.00px;top:669.80px;font-size:8px;line-height:10px;color:#bdbdbd;transform:scaleX(0.9631);font-weight:bold;">&gt;</span>
<div class="b" style="left:1012.50px;top:667.50px;width:15.50px;height:16.50px;background:#5c5c5c;border-radius:3px;"></div>
<svg class="b" style="left:1014.00px;top:670.60px;" width="8" height="9" viewBox="0 0 8 9"><ellipse cx="4" cy="4.5" rx="2.9" ry="3.3" fill="none" stroke="#e56a70" stroke-width="0.9"/></svg>
<div class="b" style="left:1022.70px;top:44.00px;width:21.30px;height:623.00px;background:#4a3b37;"></div>
<div class="b" style="left:-20.00px;top:666.50px;width:884.00px;height:34.50px;background:#494949;"></div>
<span class="t" style="left:468.40px;top:671.90px;font-size:8px;line-height:10px;color:#7e7e7e;transform:scaleX(0.7463);">(no info)</span>
</div></div>
</body></html>
